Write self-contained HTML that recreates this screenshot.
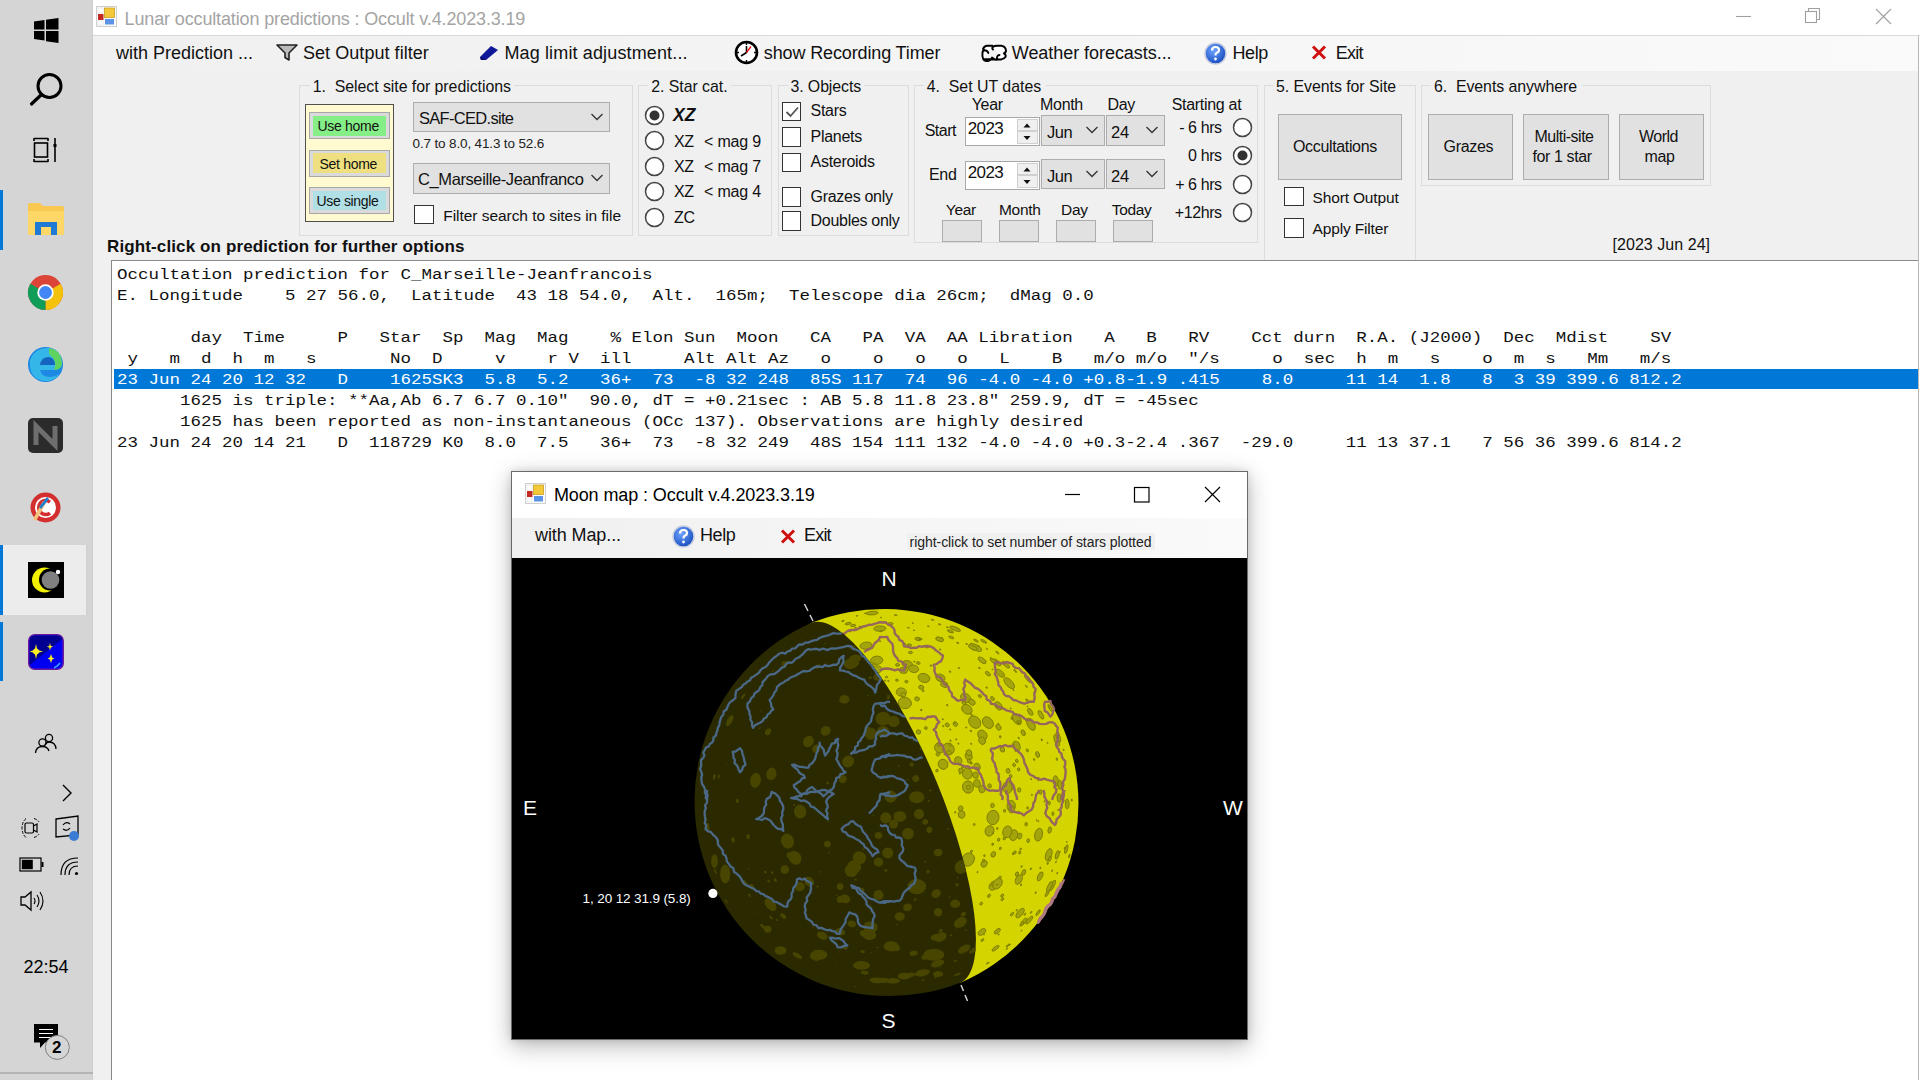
<!DOCTYPE html><html><head><meta charset="utf-8"><style>
html,body{margin:0;padding:0}
body{width:1920px;height:1080px;position:relative;overflow:hidden;background:#fff;font-family:"Liberation Sans",sans-serif}
.t{position:absolute;white-space:pre}
.b{position:absolute;box-sizing:border-box}
</style></head><body>
<div class="b" style="left:0.0px;top:0.0px;width:93.0px;height:1080.0px;background:#d5d5d5;"></div>
<div class="b" style="left:92.0px;top:0.0px;width:1.0px;height:1080.0px;background:#cdcdcd;"></div>
<svg class="b" style="left:34px;top:18px;" width="25" height="25" viewBox="0 0 25 25"><path d="M0 3.5 L10.5 2 V11.5 H0Z M12 1.8 L24.5 0 V11.5 H12Z M0 13 H10.5 V22.5 L0 21Z M12 13 H24.5 V25 L12 23.2Z" fill="#000"/></svg>
<svg class="b" style="left:28px;top:70px;" width="40" height="40" viewBox="0 0 40 40"><circle cx="21.5" cy="16" r="11.5" fill="none" stroke="#000" stroke-width="3"/><path d="M13.5 24.5 L3.5 34" stroke="#000" stroke-width="3.2" stroke-linecap="round"/></svg>
<svg class="b" style="left:32px;top:136px;" width="28" height="28" viewBox="0 0 28 28"><path d="M2 2.5 H16 M2 25.5 H16 M2 2 V5 M16 2 V5 M2 23 V26 M16 23 V26" stroke="#000" stroke-width="1.6" fill="none"/><rect x="2.5" y="7" width="13" height="14" fill="none" stroke="#000" stroke-width="1.6"/><path d="M23 2 V26" stroke="#000" stroke-width="1.6"/><rect x="21.5" y="8" width="3" height="3" fill="#000"/></svg>
<div class="b" style="left:0.0px;top:190.0px;width:3.0px;height:60.0px;background:#0078d7;"></div>
<svg class="b" style="left:27px;top:202px;" width="38" height="34" viewBox="0 0 38 34"><path d="M1 3 Q1 1 3 1 H13 L16 4 H35 Q37 4 37 6 V31 Q37 33 35 33 H3 Q1 33 1 31Z" fill="#f8c850"/><path d="M1 9 H37 V31 Q37 33 35 33 H3 Q1 33 1 31Z" fill="#ffd766"/><path d="M8 33 V20 H30 V33 H24 V25 H14 V33Z" fill="#1f7ad6"/></svg>
<svg class="b" style="left:27px;top:274px;" width="37" height="37" viewBox="0 0 37 37"><circle cx="18.5" cy="18.5" r="17.5" fill="#db4437"/><path d="M18.5 18.5 L33.66 9.75 A17.5 17.5 0 0 1 18.5 36Z" fill="#f4c20d"/><path d="M18.5 18.5 L18.5 36 A17.5 17.5 0 0 1 3.34 9.75Z" fill="#0f9d58"/><circle cx="18.5" cy="18.5" r="8.2" fill="#fff"/><circle cx="18.5" cy="18.5" r="6.4" fill="#4285f4"/></svg>
<svg class="b" style="left:27px;top:346px;" width="37" height="37" viewBox="0 0 37 37"><circle cx="18.5" cy="18.5" r="17.5" fill="#1e88e5"/><path d="M3 14 Q8 2 20 2 Q33 2 35 16 Q35 24 26 24 H13 Q14 30 22 31 Q28 31 32 28 Q27 36 17 35 Q4 33 3 20Z" fill="#35b6e8"/><path d="M13 19 Q14 11 22 11 Q28 12 28 19Z" fill="#1565c0"/><path d="M22 2 Q34 4 35 17 Q35 24 27 24 Q31 15 22 8Z" fill="#5fd35f"/></svg>
<svg class="b" style="left:27px;top:417px;" width="37" height="37" viewBox="0 0 37 37"><rect x="1" y="1" width="35" height="35" rx="5" fill="#2b2b2b"/><path d="M9 28 V9 L28 28 V9" fill="none" stroke="#6e6e6e" stroke-width="5"/></svg>
<svg class="b" style="left:27px;top:489px;" width="37" height="37" viewBox="0 0 37 37"><circle cx="18.5" cy="18.5" r="15" fill="#d32f2f"/><circle cx="18.5" cy="18.5" r="10.5" fill="#fff"/><path d="M23 13 A7 7 0 1 0 23 24" stroke="#d32f2f" stroke-width="3.5" fill="none"/><path d="M6 30 L16 12 L19 14 L9 32Z" fill="#f3c27a"/><path d="M12 18 L20 8 L22 10 L14 20Z" fill="#1e7fd0"/></svg>
<div class="b" style="left:0.0px;top:545.0px;width:88.0px;height:70.0px;background:#ececec;"></div>
<div class="b" style="left:0.0px;top:545.0px;width:3.0px;height:70.0px;background:#0078d7;"></div>
<div class="b" style="left:86.0px;top:545.0px;width:2.0px;height:70.0px;background:#d2d2d2;"></div>
<svg class="b" style="left:28px;top:562px;" width="36" height="36" viewBox="0 0 36 36"><rect width="36" height="36" fill="#000"/><circle cx="16.5" cy="18" r="12.5" fill="#f2f200"/><circle cx="22" cy="17.5" r="11" fill="#000"/><circle cx="22.5" cy="18" r="8.8" fill="#808080"/><circle cx="30" cy="10" r="2.2" fill="#fff"/></svg>
<div class="b" style="left:0.0px;top:622.0px;width:3.0px;height:59.0px;background:#0078d7;"></div>
<svg class="b" style="left:28px;top:634px;" width="36" height="36" viewBox="0 0 36 36"><rect x="0.8" y="0.8" width="34.4" height="34.4" rx="6" fill="#0000f0" stroke="#6a1aa0" stroke-width="1.6"/><path d="M1.6 31 L34.4 5 V7 Q34.4 1.6 29 1.6 H7 Q1.6 1.6 1.6 7Z" fill="#000090"/><path d="M8 10 L9.3 16 L15 17.5 L9.3 19 L8 25 L6.7 19 L1.5 17.5 L6.7 16Z" fill="#ffee20"/><circle cx="8" cy="17.5" r="3" fill="#ffee20"/><path d="M22 9 l0.8 3 2.5 0.8 -2.5 0.8 -0.8 3 -0.8 -3 -2.5 -0.8 2.5 -0.8z M23 20 l1.2 3.5 2.3 1 -2.3 1 -1.2 3.5 -1.2 -3.5 -2.3 -1 2.3 -1z" fill="#ffee20"/><path d="M26 34 Q30 32 32 29" stroke="#39a0ff" stroke-width="1.6" fill="none"/></svg>
<svg class="b" style="left:34px;top:733px;" width="24" height="24" viewBox="0 0 24 24"><circle cx="8.5" cy="9.5" r="3.6" fill="none" stroke="#000" stroke-width="1.3"/><circle cx="15" cy="5" r="3.6" fill="none" stroke="#000" stroke-width="1.3"/><path d="M1.5 20 Q2 13.5 8.5 13.5 Q13.5 13.5 15 18 M11 12 Q12 9 15 9 Q21.5 9 22 16" fill="none" stroke="#000" stroke-width="1.3"/></svg>
<svg class="b" style="left:60px;top:783px;" width="14" height="20" viewBox="0 0 14 20"><path d="M3 2 L11 10 L3 18" fill="none" stroke="#000" stroke-width="1.4"/></svg>
<svg class="b" style="left:20px;top:816px;" width="22" height="24" viewBox="0 0 22 24"><rect x="5" y="7" width="8.5" height="10" rx="1.5" fill="none" stroke="#000" stroke-width="1.2"/><path d="M13.5 10 L17 8 V16 L13.5 14" fill="none" stroke="#000" stroke-width="1.2"/><path d="M6 2.5 Q2 6 2 12 Q2 18 6 21.5 M14 2.5 Q18 4 19 6 M14 21.5 Q18 20 19 18" fill="none" stroke="#000" stroke-width="1" stroke-dasharray="3 1.5"/></svg>
<svg class="b" style="left:54px;top:815px;" width="27" height="27" viewBox="0 0 27 27"><path d="M2 4 L24 1 V20 L2 22Z" fill="none" stroke="#000" stroke-width="1.3"/><path d="M9 10 Q12 6 16 9 M16 13 Q13 17 9 14" fill="none" stroke="#000" stroke-width="1.2"/><circle cx="20" cy="21" r="5" fill="#3a7bd5"/></svg>
<svg class="b" style="left:19px;top:857px;" width="26" height="16" viewBox="0 0 26 16"><rect x="1" y="1" width="21" height="13" fill="none" stroke="#000" stroke-width="1.2"/><rect x="2.8" y="2.8" width="11" height="9.4" fill="#000"/><rect x="22.5" y="5" width="2" height="5" fill="#000"/></svg>
<svg class="b" style="left:57px;top:853px;" width="26" height="26" viewBox="0 0 26 26"><path d="M4 22 Q4 5 21 5 M8 22 Q8 9 21 9 M12 22 Q12 13 21 13" fill="none" stroke="#000" stroke-width="1.2"/><circle cx="19.5" cy="20.5" r="1.6" fill="#000"/></svg>
<svg class="b" style="left:19px;top:889px;" width="26" height="24" viewBox="0 0 26 24"><path d="M2 8 H6 L12 3 V21 L6 16 H2Z" fill="none" stroke="#000" stroke-width="1.3"/><path d="M15 9 Q17 12 15 15 M18 6 Q22 12 18 18 M21 3 Q27 12 21 21" fill="none" stroke="#000" stroke-width="1.1"/></svg>
<div class="t" style="left:23.5px;top:957.7px;font-size:18px;line-height:18px;color:#000;font-weight:400;letter-spacing:0px;font-family:'Liberation Sans', sans-serif;">22:54</div>
<svg class="b" style="left:30px;top:1020px;" width="44" height="44" viewBox="0 0 44 44"><path d="M4 4 H28 V22.5 H15 L10 28 V22.5 H4Z" fill="#000"/><path d="M9 9.5 H23 M9 13.5 H23 M9 17.5 H21" stroke="#fff" stroke-width="1.2"/><circle cx="27.3" cy="27.4" r="12" fill="#d5d5d5" stroke="#808080" stroke-width="1"/></svg>
<div class="t" style="left:52.0px;top:1039.0px;font-size:17px;line-height:17px;color:#000;font-weight:700;letter-spacing:0px;font-family:'Liberation Sans', sans-serif;">2</div>
<div class="b" style="left:0.0px;top:1072.0px;width:93.0px;height:2.0px;background:#b4b4b4;"></div>
<div class="b" style="left:93.0px;top:0.0px;width:1827.0px;height:36.0px;background:#fff;"></div>
<div class="b" style="left:93.0px;top:35.0px;width:1827.0px;height:1.0px;background:#d8d8d8;"></div>
<svg class="b" style="left:96px;top:6px;" width="21" height="21" viewBox="0 0 21 21"><rect x="0.5" y="0.5" width="20" height="20" fill="#fbfbfb" stroke="#cfcfcf"/><rect x="2" y="2" width="5" height="5" fill="#fff" stroke="#e0e0e0" stroke-width="0.6"/><rect x="2" y="8" width="5.5" height="6" fill="#c42a22"/><rect x="2" y="15" width="5" height="4" fill="#fff" stroke="#e0e0e0" stroke-width="0.6"/><rect x="8.5" y="2" width="10" height="9.5" fill="#f3c93a" stroke="#c8a020" stroke-width="0.8"/><rect x="9" y="13" width="9" height="5.5" fill="#5b93e6"/></svg>
<div class="t" style="left:124.6px;top:10.2px;font-size:18px;line-height:18px;color:#a4a4a4;font-weight:400;letter-spacing:-0.14px;font-family:'Liberation Sans', sans-serif;">Lunar occultation predictions : Occult v.4.2023.3.19</div>
<svg class="b" style="left:1730px;top:5px;" width="180" height="26" viewBox="0 0 180 26"><path d="M6 11.5 H21" stroke="#a0a0a0" stroke-width="1.1"/><rect x="75.5" y="6.5" width="11" height="11" fill="none" stroke="#a0a0a0" stroke-width="1.1"/><path d="M78.5 6.5 V3.5 H89.5 V14.5 H86.5" fill="none" stroke="#a0a0a0" stroke-width="1.1"/><path d="M146 4 L161 19 M161 4 L146 19" stroke="#a0a0a0" stroke-width="1.1"/></svg>
<div class="b" style="left:93.0px;top:36.0px;width:1827.0px;height:35.0px;background:linear-gradient(to right,#f0f0f0,#f3f3f3 30%,#fafafa);"></div>
<div class="t" style="left:116.0px;top:43.5px;font-size:18px;line-height:18px;color:#111;font-weight:400;letter-spacing:0px;font-family:'Liberation Sans', sans-serif;">with Prediction ...</div>
<svg class="b" style="left:276px;top:44px;" width="22" height="17" viewBox="0 0 22 17"><path d="M1 1 H21 L13 9 V16 L9 13.5 V9Z" fill="#bbb" stroke="#222" stroke-width="1.6" stroke-linejoin="round"/></svg>
<div class="t" style="left:303.0px;top:43.5px;font-size:18px;line-height:18px;color:#111;font-weight:400;letter-spacing:0.05px;font-family:'Liberation Sans', sans-serif;">Set Output filter</div>
<svg class="b" style="left:478px;top:44px;" width="22" height="17" viewBox="0 0 22 17"><path d="M2 13 L13 2 L20 6 L8 16 L3 16Z" fill="#10189a"/><path d="M2 13 L3 16 L8 16" fill="#050a60"/></svg>
<div class="t" style="left:504.4px;top:43.5px;font-size:18px;line-height:18px;color:#111;font-weight:400;letter-spacing:0.14px;font-family:'Liberation Sans', sans-serif;">Mag limit adjustment...</div>
<svg class="b" style="left:734px;top:40px;" width="25" height="25" viewBox="0 0 25 25"><circle cx="12.5" cy="12.5" r="10.5" fill="#fff" stroke="#000" stroke-width="2.6"/><path d="M12.5 12.5 L12.5 6 M12.5 12.5 L7 16" stroke="#000" stroke-width="1.6"/><path d="M12.5 12.5 L17 6.5" stroke="#e00" stroke-width="1.3"/><path d="M12.5 3 V5 M12.5 20 V22 M3 12.5 H5 M20 12.5 H22" stroke="#000" stroke-width="1.4"/></svg>
<div class="t" style="left:763.8px;top:43.5px;font-size:18px;line-height:18px;color:#111;font-weight:400;letter-spacing:-0.13px;font-family:'Liberation Sans', sans-serif;">show Recording Timer</div>
<svg class="b" style="left:981px;top:44px;" width="27" height="19" viewBox="0 0 27 19"><path d="M2.2 15 Q1 12 1.5 9 Q1.5 6.5 3.5 6.3 Q6.5 6.5 7.3 9 M3.5 6.3 Q2.5 5.5 2 5 Q3.5 1.8 6 1.8 H11.5 L11.8 3 Q10.5 4 12 5.5 M11.8 3 Q13.5 1.8 16 1.8 H20.5 Q24.5 2.5 25 6.5 Q25.2 8.5 22.8 9.3 Q25.2 10.5 24.6 12.8 Q23 15.3 20 15.5 H16.8 Q15.2 14 16.2 12.5 Q17 11.2 18.5 11 M16.8 15.5 Q15 15.8 14 15.6 L11 13.5 Q9.5 17 7 17 H5.2 Q3 16.8 2.2 15Z" fill="#fff" stroke="#000" stroke-width="1.9" stroke-linecap="round" stroke-linejoin="round"/></svg>
<div class="t" style="left:1011.8px;top:43.5px;font-size:18px;line-height:18px;color:#111;font-weight:400;letter-spacing:-0.05px;font-family:'Liberation Sans', sans-serif;">Weather forecasts...</div>
<svg class="b" style="left:1204px;top:41.5px;" width="23" height="23" viewBox="0 0 23 23"><defs><radialGradient id="hg" cx="40%" cy="35%" r="65%"><stop offset="0" stop-color="#6fa4ff"/><stop offset="1" stop-color="#1a4fc0"/></radialGradient></defs><circle cx="11.5" cy="11.5" r="10.5" fill="url(#hg)" stroke="#c8cde0" stroke-width="1.5"/><path d="M8 8.5 Q8 5 11.5 5 Q15 5 15 8 Q15 10 12.5 11 Q11.5 11.5 11.5 13.5" fill="none" stroke="#fff" stroke-width="2.2"/><circle cx="11.5" cy="17" r="1.4" fill="#fff"/></svg>
<div class="t" style="left:1232.5px;top:43.5px;font-size:18px;line-height:18px;color:#111;font-weight:400;letter-spacing:-0.4px;font-family:'Liberation Sans', sans-serif;">Help</div>
<svg class="b" style="left:1311px;top:45px;" width="16" height="15" viewBox="0 0 16 15"><path d="M2 1.5 L14 13.5 M14 1.5 L2 13.5" stroke="#d01010" stroke-width="3"/></svg>
<div class="t" style="left:1335.8px;top:43.5px;font-size:18px;line-height:18px;color:#111;font-weight:400;letter-spacing:-0.8px;font-family:'Liberation Sans', sans-serif;">Exit</div>
<div class="b" style="left:93.0px;top:71.0px;width:1827.0px;height:189.0px;background:#f0f0f0;"></div>
<div class="b" style="left:93.0px;top:260.0px;width:18.0px;height:820.0px;background:#f0f0f0;"></div>
<div class="b" style="left:299.0px;top:85.0px;width:334.0px;height:151.0px;border:1px solid #dcdcdc;"></div>
<div class="b" style="left:309.8px;top:83.0px;width:204.0px;height:5.0px;background:#f0f0f0;"></div>
<div class="t" style="left:312.8px;top:78.5px;font-size:15.9px;line-height:15.9px;color:#111;font-weight:400;letter-spacing:-0.05px;font-family:'Liberation Sans', sans-serif;">1.  Select site for predictions</div>
<div class="b" style="left:638.0px;top:85.0px;width:134.0px;height:151.0px;border:1px solid #dcdcdc;"></div>
<div class="b" style="left:648.3px;top:83.0px;width:82.3px;height:5.0px;background:#f0f0f0;"></div>
<div class="t" style="left:651.3px;top:78.5px;font-size:15.9px;line-height:15.9px;color:#111;font-weight:400;letter-spacing:-0.05px;font-family:'Liberation Sans', sans-serif;">2. Star cat.</div>
<div class="b" style="left:778.0px;top:85.0px;width:131.0px;height:151.0px;border:1px solid #dcdcdc;"></div>
<div class="b" style="left:787.5px;top:83.0px;width:76.8px;height:5.0px;background:#f0f0f0;"></div>
<div class="t" style="left:790.5px;top:78.5px;font-size:15.9px;line-height:15.9px;color:#111;font-weight:400;letter-spacing:-0.1px;font-family:'Liberation Sans', sans-serif;">3. Objects</div>
<div class="b" style="left:914.0px;top:85.0px;width:344.0px;height:158.0px;border:1px solid #dcdcdc;"></div>
<div class="b" style="left:923.7px;top:83.0px;width:122.3px;height:5.0px;background:#f0f0f0;"></div>
<div class="t" style="left:926.7px;top:78.5px;font-size:15.9px;line-height:15.9px;color:#111;font-weight:400;letter-spacing:0px;font-family:'Liberation Sans', sans-serif;">4.  Set UT dates</div>
<div class="b" style="left:1264.0px;top:85.0px;width:152.0px;height:190.0px;border:1px solid #dcdcdc;"></div>
<div class="b" style="left:1273.0px;top:83.0px;width:126.0px;height:5.0px;background:#f0f0f0;"></div>
<div class="t" style="left:1276.0px;top:78.5px;font-size:15.9px;line-height:15.9px;color:#111;font-weight:400;letter-spacing:-0.05px;font-family:'Liberation Sans', sans-serif;">5. Events for Site</div>
<div class="b" style="left:1421.0px;top:85.0px;width:290.0px;height:101.0px;border:1px solid #dcdcdc;"></div>
<div class="b" style="left:1431.0px;top:83.0px;width:151.0px;height:5.0px;background:#f0f0f0;"></div>
<div class="t" style="left:1434.0px;top:78.5px;font-size:15.9px;line-height:15.9px;color:#111;font-weight:400;letter-spacing:-0.05px;font-family:'Liberation Sans', sans-serif;">6.  Events anywhere</div>
<div class="b" style="left:305.0px;top:104.0px;width:89.0px;height:118.0px;background:#fffad0;border:1.5px solid #505050;"></div>
<div class="b" style="left:309.0px;top:111.7px;width:81.0px;height:27.3px;background:#dadada;border:1.5px solid #a8a8a8;"></div>
<div class="b" style="left:313.0px;top:115.5px;width:73.0px;height:20.0px;background:#86ee86;"></div>
<div class="t" style="left:317.5px;top:119.1px;font-size:14px;line-height:14px;color:#111;font-weight:400;letter-spacing:-0.3px;font-family:'Liberation Sans', sans-serif;">Use home</div>
<div class="b" style="left:309.0px;top:149.5px;width:81.0px;height:27.5px;background:#dadada;border:1.5px solid #a8a8a8;"></div>
<div class="b" style="left:313.0px;top:153.3px;width:73.0px;height:19.9px;background:#eedf80;"></div>
<div class="t" style="left:319.5px;top:156.6px;font-size:14px;line-height:14px;color:#111;font-weight:400;letter-spacing:-0.3px;font-family:'Liberation Sans', sans-serif;">Set home</div>
<div class="b" style="left:309.0px;top:187.0px;width:81.0px;height:27.0px;background:#dadada;border:1.5px solid #a8a8a8;"></div>
<div class="b" style="left:313.0px;top:190.8px;width:73.0px;height:19.4px;background:#b0dfe6;"></div>
<div class="t" style="left:316.5px;top:194.1px;font-size:14px;line-height:14px;color:#111;font-weight:400;letter-spacing:-0.35px;font-family:'Liberation Sans', sans-serif;">Use single</div>
<div class="b" style="left:413.0px;top:101.5px;width:197.0px;height:30.5px;background:#e1e1e1;border:1.5px solid #adadad;"></div>
<div class="b" style="left:415px;top:101.5px;width:169px;height:30.5px;overflow:hidden">
<div class="t" style="left:4.0px;top:8.0px;font-size:16.5px;line-height:16.5px;letter-spacing:-0.7px;color:#111">SAF-CED.site</div></div>
<svg class="b" style="left:590px;top:112px;" width="14" height="10" viewBox="0 0 14 10"><path d="M1.5 2 L7 7.5 L12.5 2" fill="none" stroke="#333" stroke-width="1.3"/></svg>
<div class="t" style="left:412.6px;top:137.2px;font-size:13.5px;line-height:13.5px;color:#222;font-weight:400;letter-spacing:-0.15px;font-family:'Liberation Sans', sans-serif;">0.7 to 8.0, 41.3 to 52.6</div>
<div class="b" style="left:413.0px;top:163.0px;width:197.0px;height:30.5px;background:#e1e1e1;border:1.5px solid #adadad;"></div>
<div class="b" style="left:415px;top:163px;width:169px;height:30.5px;overflow:hidden">
<div class="t" style="left:3.0px;top:8.0px;font-size:16.5px;line-height:16.5px;letter-spacing:-0.4px;color:#111">C_Marseille-Jeanfrancois</div></div>
<svg class="b" style="left:590px;top:173px;" width="14" height="10" viewBox="0 0 14 10"><path d="M1.5 2 L7 7.5 L12.5 2" fill="none" stroke="#333" stroke-width="1.3"/></svg>
<div class="b" style="left:414.0px;top:204.5px;width:19.5px;height:19.5px;background:#fff;border:1.6px solid #333;"></div>
<div class="t" style="left:443.3px;top:207.8px;font-size:15.5px;line-height:15.5px;color:#111;font-weight:400;letter-spacing:-0.05px;font-family:'Liberation Sans', sans-serif;">Filter search to sites in file</div>
<svg class="b" style="left:644px;top:105px;" width="21" height="21" viewBox="0 0 21 21"><circle cx="10.5" cy="10.5" r="9" fill="#fff" stroke="#444" stroke-width="1.5"/><circle cx="10.5" cy="10.5" r="5" fill="#333"/></svg>
<svg class="b" style="left:644px;top:130px;" width="21" height="21" viewBox="0 0 21 21"><circle cx="10.5" cy="10.5" r="9" fill="#fff" stroke="#444" stroke-width="1.5"/></svg>
<svg class="b" style="left:644px;top:156px;" width="21" height="21" viewBox="0 0 21 21"><circle cx="10.5" cy="10.5" r="9" fill="#fff" stroke="#444" stroke-width="1.5"/></svg>
<svg class="b" style="left:644px;top:181px;" width="21" height="21" viewBox="0 0 21 21"><circle cx="10.5" cy="10.5" r="9" fill="#fff" stroke="#444" stroke-width="1.5"/></svg>
<svg class="b" style="left:644px;top:207px;" width="21" height="21" viewBox="0 0 21 21"><circle cx="10.5" cy="10.5" r="9" fill="#fff" stroke="#444" stroke-width="1.5"/></svg>
<div class="t" style="left:673.0px;top:106.8px;font-size:17.5px;line-height:17.5px;color:#111;font-weight:700;letter-spacing:0px;font-family:'Liberation Sans', sans-serif;font-style:italic;">XZ</div>
<div class="t" style="left:674.0px;top:133.5px;font-size:16px;line-height:16px;color:#111;font-weight:400;letter-spacing:-0.3px;font-family:'Liberation Sans', sans-serif;">XZ</div>
<div class="t" style="left:704.0px;top:133.5px;font-size:16px;line-height:16px;color:#111;font-weight:400;letter-spacing:-0.2px;font-family:'Liberation Sans', sans-serif;">&lt; mag 9</div>
<div class="t" style="left:674.0px;top:159.0px;font-size:16px;line-height:16px;color:#111;font-weight:400;letter-spacing:-0.3px;font-family:'Liberation Sans', sans-serif;">XZ</div>
<div class="t" style="left:704.0px;top:159.0px;font-size:16px;line-height:16px;color:#111;font-weight:400;letter-spacing:-0.2px;font-family:'Liberation Sans', sans-serif;">&lt; mag 7</div>
<div class="t" style="left:674.0px;top:184.2px;font-size:16px;line-height:16px;color:#111;font-weight:400;letter-spacing:-0.3px;font-family:'Liberation Sans', sans-serif;">XZ</div>
<div class="t" style="left:704.0px;top:184.2px;font-size:16px;line-height:16px;color:#111;font-weight:400;letter-spacing:-0.2px;font-family:'Liberation Sans', sans-serif;">&lt; mag 4</div>
<div class="t" style="left:674.0px;top:209.8px;font-size:16px;line-height:16px;color:#111;font-weight:400;letter-spacing:-0.3px;font-family:'Liberation Sans', sans-serif;">ZC</div>
<div class="b" style="left:781.8px;top:101.5px;width:19.5px;height:19.5px;background:#fff;border:1.6px solid #333;"></div>
<svg class="b" style="left:784px;top:104px;" width="16" height="16" viewBox="0 0 16 16"><path d="M2.5 8 L6.5 12 L14 3.5" fill="none" stroke="#555" stroke-width="1.8"/></svg>
<div class="t" style="left:810.6px;top:102.9px;font-size:16px;line-height:16px;color:#111;font-weight:400;letter-spacing:-0.3px;font-family:'Liberation Sans', sans-serif;">Stars</div>
<div class="b" style="left:781.8px;top:127.0px;width:19.5px;height:19.5px;background:#fff;border:1.6px solid #333;"></div>
<div class="t" style="left:810.6px;top:128.8px;font-size:16px;line-height:16px;color:#111;font-weight:400;letter-spacing:-0.3px;font-family:'Liberation Sans', sans-serif;">Planets</div>
<div class="b" style="left:781.8px;top:152.7px;width:19.5px;height:19.5px;background:#fff;border:1.6px solid #333;"></div>
<div class="t" style="left:810.6px;top:154.0px;font-size:16px;line-height:16px;color:#111;font-weight:400;letter-spacing:-0.3px;font-family:'Liberation Sans', sans-serif;">Asteroids</div>
<div class="b" style="left:781.8px;top:187.3px;width:19.5px;height:19.5px;background:#fff;border:1.6px solid #333;"></div>
<div class="t" style="left:810.6px;top:188.7px;font-size:16px;line-height:16px;color:#111;font-weight:400;letter-spacing:-0.3px;font-family:'Liberation Sans', sans-serif;">Grazes only</div>
<div class="b" style="left:781.8px;top:211.4px;width:19.5px;height:19.5px;background:#fff;border:1.6px solid #333;"></div>
<div class="t" style="left:810.6px;top:213.1px;font-size:16px;line-height:16px;color:#111;font-weight:400;letter-spacing:-0.3px;font-family:'Liberation Sans', sans-serif;">Doubles only</div>
<div class="t" style="left:971.7px;top:97.2px;font-size:16px;line-height:16px;color:#111;font-weight:400;letter-spacing:-0.3px;font-family:'Liberation Sans', sans-serif;">Year</div>
<div class="t" style="left:1040.0px;top:97.2px;font-size:16px;line-height:16px;color:#111;font-weight:400;letter-spacing:-0.3px;font-family:'Liberation Sans', sans-serif;">Month</div>
<div class="t" style="left:1107.5px;top:97.2px;font-size:16px;line-height:16px;color:#111;font-weight:400;letter-spacing:-0.3px;font-family:'Liberation Sans', sans-serif;">Day</div>
<div class="t" style="left:1171.7px;top:97.2px;font-size:16px;line-height:16px;color:#111;font-weight:400;letter-spacing:-0.3px;font-family:'Liberation Sans', sans-serif;">Starting at</div>
<div class="t" style="left:924.7px;top:123.1px;font-size:16px;line-height:16px;color:#111;font-weight:400;letter-spacing:-0.5px;font-family:'Liberation Sans', sans-serif;">Start</div>
<div class="t" style="left:929.0px;top:166.9px;font-size:16px;line-height:16px;color:#111;font-weight:400;letter-spacing:-0.3px;font-family:'Liberation Sans', sans-serif;">End</div>
<div class="b" style="left:964.7px;top:116.7px;width:75.3px;height:29.3px;background:#fff;border:1.5px solid #a8a8a8;"></div>
<div class="t" style="left:967.7px;top:119.7px;font-size:17px;line-height:17px;color:#111;font-weight:400;letter-spacing:-0.6px;font-family:'Liberation Sans', sans-serif;">2023</div>
<div class="b" style="left:1017.0px;top:118.7px;width:21.0px;height:12.6px;background:#f0f0f0;border:1px solid #d0d0d0;"></div>
<div class="b" style="left:1017.0px;top:131.3px;width:21.0px;height:12.7px;background:#f0f0f0;border:1px solid #d0d0d0;"></div>
<svg class="b" style="left:1022px;top:122px;" width="10" height="20" viewBox="0 0 10 20"><path d="M1.5 5.5 L5 1.5 L8.5 5.5Z M1.5 14 L5 18 L8.5 14Z" fill="#111"/></svg>
<div class="b" style="left:964.7px;top:160.5px;width:75.3px;height:29.0px;background:#fff;border:1.5px solid #a8a8a8;"></div>
<div class="t" style="left:967.7px;top:163.6px;font-size:17px;line-height:17px;color:#111;font-weight:400;letter-spacing:-0.6px;font-family:'Liberation Sans', sans-serif;">2023</div>
<div class="b" style="left:1017.0px;top:162.5px;width:21.0px;height:12.5px;background:#f0f0f0;border:1px solid #d0d0d0;"></div>
<div class="b" style="left:1017.0px;top:175.0px;width:21.0px;height:12.5px;background:#f0f0f0;border:1px solid #d0d0d0;"></div>
<svg class="b" style="left:1022px;top:166px;" width="10" height="20" viewBox="0 0 10 20"><path d="M1.5 5.5 L5 1.5 L8.5 5.5Z M1.5 14 L5 18 L8.5 14Z" fill="#111"/></svg>
<div class="b" style="left:1040.8px;top:115.0px;width:64.2px;height:30.5px;background:#e1e1e1;border:1.5px solid #adadad;"></div>
<div class="b" style="left:1042.8px;top:115px;width:36.200000000000045px;height:30.5px;overflow:hidden">
<div class="t" style="left:4.2px;top:8.5px;font-size:16.5px;line-height:16.5px;letter-spacing:-0.5px;color:#111">Jun</div></div>
<svg class="b" style="left:1085px;top:125px;" width="14" height="10" viewBox="0 0 14 10"><path d="M1.5 2 L7 7.5 L12.5 2" fill="none" stroke="#333" stroke-width="1.3"/></svg>
<div class="b" style="left:1106.0px;top:115.0px;width:59.0px;height:30.5px;background:#e1e1e1;border:1.5px solid #adadad;"></div>
<div class="b" style="left:1108px;top:115px;width:31px;height:30.5px;overflow:hidden">
<div class="t" style="left:3.0px;top:8.5px;font-size:16.5px;line-height:16.5px;letter-spacing:-0.3px;color:#111">24</div></div>
<svg class="b" style="left:1145px;top:125px;" width="14" height="10" viewBox="0 0 14 10"><path d="M1.5 2 L7 7.5 L12.5 2" fill="none" stroke="#333" stroke-width="1.3"/></svg>
<div class="b" style="left:1040.8px;top:159.0px;width:64.2px;height:30.0px;background:#e1e1e1;border:1.5px solid #adadad;"></div>
<div class="b" style="left:1042.8px;top:159px;width:36.200000000000045px;height:30px;overflow:hidden">
<div class="t" style="left:4.2px;top:8.5px;font-size:16.5px;line-height:16.5px;letter-spacing:-0.5px;color:#111">Jun</div></div>
<svg class="b" style="left:1085px;top:169px;" width="14" height="10" viewBox="0 0 14 10"><path d="M1.5 2 L7 7.5 L12.5 2" fill="none" stroke="#333" stroke-width="1.3"/></svg>
<div class="b" style="left:1106.0px;top:159.0px;width:59.0px;height:30.0px;background:#e1e1e1;border:1.5px solid #adadad;"></div>
<div class="b" style="left:1108px;top:159px;width:31px;height:30px;overflow:hidden">
<div class="t" style="left:3.0px;top:8.5px;font-size:16.5px;line-height:16.5px;letter-spacing:-0.3px;color:#111">24</div></div>
<svg class="b" style="left:1145px;top:169px;" width="14" height="10" viewBox="0 0 14 10"><path d="M1.5 2 L7 7.5 L12.5 2" fill="none" stroke="#333" stroke-width="1.3"/></svg>
<svg class="b" style="left:1232px;top:117px;" width="21" height="21" viewBox="0 0 21 21"><circle cx="10.5" cy="10.5" r="9" fill="#fff" stroke="#444" stroke-width="1.5"/></svg>
<div class="t" style="left:1100px;width:121.7px;text-align:right;top:119.9px;font-size:16px;line-height:16px;color:#111;letter-spacing:-0.4px">- 6 hrs</div>
<svg class="b" style="left:1232px;top:145px;" width="21" height="21" viewBox="0 0 21 21"><circle cx="10.5" cy="10.5" r="9" fill="#fff" stroke="#444" stroke-width="1.5"/><circle cx="10.5" cy="10.5" r="5" fill="#333"/></svg>
<div class="t" style="left:1100px;width:121.7px;text-align:right;top:148.2px;font-size:16px;line-height:16px;color:#111;letter-spacing:-0.4px">0 hrs</div>
<svg class="b" style="left:1232px;top:174px;" width="21" height="21" viewBox="0 0 21 21"><circle cx="10.5" cy="10.5" r="9" fill="#fff" stroke="#444" stroke-width="1.5"/></svg>
<div class="t" style="left:1100px;width:121.7px;text-align:right;top:176.6px;font-size:16px;line-height:16px;color:#111;letter-spacing:-0.4px">+ 6 hrs</div>
<svg class="b" style="left:1232px;top:202px;" width="21" height="21" viewBox="0 0 21 21"><circle cx="10.5" cy="10.5" r="9" fill="#fff" stroke="#444" stroke-width="1.5"/></svg>
<div class="t" style="left:1100px;width:121.7px;text-align:right;top:204.9px;font-size:16px;line-height:16px;color:#111;letter-spacing:-0.4px">+12hrs</div>
<div class="t" style="left:945.8px;top:201.8px;font-size:15.5px;line-height:15.5px;color:#111;font-weight:400;letter-spacing:-0.3px;font-family:'Liberation Sans', sans-serif;">Year</div>
<div class="b" style="left:942.0px;top:220.0px;width:40.0px;height:22.0px;background:#e1e1e1;border:1.5px solid #adadad;"></div>
<div class="t" style="left:999.0px;top:201.8px;font-size:15.5px;line-height:15.5px;color:#111;font-weight:400;letter-spacing:-0.3px;font-family:'Liberation Sans', sans-serif;">Month</div>
<div class="b" style="left:999.0px;top:220.0px;width:40.0px;height:22.0px;background:#e1e1e1;border:1.5px solid #adadad;"></div>
<div class="t" style="left:1061.0px;top:201.8px;font-size:15.5px;line-height:15.5px;color:#111;font-weight:400;letter-spacing:-0.3px;font-family:'Liberation Sans', sans-serif;">Day</div>
<div class="b" style="left:1056.0px;top:220.0px;width:40.0px;height:22.0px;background:#e1e1e1;border:1.5px solid #adadad;"></div>
<div class="t" style="left:1111.7px;top:201.8px;font-size:15.5px;line-height:15.5px;color:#111;font-weight:400;letter-spacing:-0.3px;font-family:'Liberation Sans', sans-serif;">Today</div>
<div class="b" style="left:1113.0px;top:220.0px;width:40.0px;height:22.0px;background:#e1e1e1;border:1.5px solid #adadad;"></div>
<div class="b" style="left:1278.0px;top:113.5px;width:124.0px;height:66.7px;background:#e1e1e1;border:1.5px solid #adadad;"></div>
<div class="t" style="left:1293.0px;top:139.4px;font-size:16px;line-height:16px;color:#111;font-weight:400;letter-spacing:-0.35px;font-family:'Liberation Sans', sans-serif;">Occultations</div>
<div class="b" style="left:1284.0px;top:186.7px;width:19.5px;height:19.5px;background:#fff;border:1.6px solid #333;"></div>
<div class="b" style="left:1284.0px;top:218.0px;width:19.5px;height:19.5px;background:#fff;border:1.6px solid #333;"></div>
<div class="t" style="left:1312.5px;top:189.8px;font-size:15.5px;line-height:15.5px;color:#111;font-weight:400;letter-spacing:-0.15px;font-family:'Liberation Sans', sans-serif;">Short Output</div>
<div class="t" style="left:1312.5px;top:220.8px;font-size:15.5px;line-height:15.5px;color:#111;font-weight:400;letter-spacing:-0.15px;font-family:'Liberation Sans', sans-serif;">Apply Filter</div>
<div class="b" style="left:1428.0px;top:113.5px;width:85.0px;height:66.7px;background:#e1e1e1;border:1.5px solid #adadad;"></div>
<div class="t" style="left:1443.5px;top:139.4px;font-size:16px;line-height:16px;color:#111;font-weight:400;letter-spacing:-0.3px;font-family:'Liberation Sans', sans-serif;">Grazes</div>
<div class="b" style="left:1523.0px;top:113.5px;width:86.0px;height:66.7px;background:#e1e1e1;border:1.5px solid #adadad;"></div>
<div class="t" style="left:1534.5px;top:128.9px;font-size:16px;line-height:16px;color:#111;font-weight:400;letter-spacing:-0.5px;font-family:'Liberation Sans', sans-serif;">Multi-site</div>
<div class="t" style="left:1532.5px;top:148.9px;font-size:16px;line-height:16px;color:#111;font-weight:400;letter-spacing:-0.4px;font-family:'Liberation Sans', sans-serif;">for 1 star</div>
<div class="b" style="left:1619.0px;top:113.5px;width:85.0px;height:66.7px;background:#e1e1e1;border:1.5px solid #adadad;"></div>
<div class="t" style="left:1639.0px;top:128.9px;font-size:16px;line-height:16px;color:#111;font-weight:400;letter-spacing:-0.5px;font-family:'Liberation Sans', sans-serif;">World</div>
<div class="t" style="left:1644.5px;top:148.9px;font-size:16px;line-height:16px;color:#111;font-weight:400;letter-spacing:-0.4px;font-family:'Liberation Sans', sans-serif;">map</div>
<div class="t" style="left:1612.5px;top:237.4px;font-size:16px;line-height:16px;color:#111;font-weight:400;letter-spacing:0.05px;font-family:'Liberation Sans', sans-serif;">[2023 Jun 24]</div>
<div class="t" style="left:107.0px;top:238.1px;font-size:17px;line-height:17px;color:#111;font-weight:700;letter-spacing:0.12px;font-family:'Liberation Sans', sans-serif;">Right-click on prediction for further options</div>
<div class="b" style="left:111.0px;top:260.0px;width:1809.0px;height:820.0px;background:#fff;border:1px solid #8a8a8a;border-bottom:none;border-right:none;"></div>
<div class="b" style="left:1918.0px;top:36.0px;width:1.0px;height:1044.0px;background:#b8b8b8;"></div>
<div class="b" style="left:1919.0px;top:36.0px;width:1.0px;height:1044.0px;background:#fff;"></div>
<div class="b" style="left:114.0px;top:368.5px;width:1804.0px;height:20.5px;background:#0078d7;"></div>
<div class="t" style="left:117.0px;top:266.3px;font-size:17.5px;line-height:17.5px;color:#111;font-weight:400;letter-spacing:0px;font-family:'Liberation Mono', monospace;transform:scaleY(0.84);transform-origin:0 13.3px;">Occultation prediction for C_Marseille-Jeanfrancois</div>
<div class="t" style="left:117.0px;top:287.3px;font-size:17.5px;line-height:17.5px;color:#111;font-weight:400;letter-spacing:0px;font-family:'Liberation Mono', monospace;transform:scaleY(0.84);transform-origin:0 13.3px;">E. Longitude    5 27 56.0,  Latitude  43 18 54.0,  Alt.  165m;  Telescope dia 26cm;  dMag 0.0</div>
<div class="t" style="left:117.0px;top:308.3px;font-size:17.5px;line-height:17.5px;color:#111;font-weight:400;letter-spacing:0px;font-family:'Liberation Mono', monospace;transform:scaleY(0.84);transform-origin:0 13.3px;"></div>
<div class="t" style="left:117.0px;top:329.3px;font-size:17.5px;line-height:17.5px;color:#111;font-weight:400;letter-spacing:0px;font-family:'Liberation Mono', monospace;transform:scaleY(0.84);transform-origin:0 13.3px;">       day  Time     P   Star  Sp  Mag  Mag    % Elon Sun  Moon   CA   PA  VA  AA Libration   A   B   RV    Cct durn  R.A. (J2000)  Dec  Mdist    SV</div>
<div class="t" style="left:117.0px;top:350.3px;font-size:17.5px;line-height:17.5px;color:#111;font-weight:400;letter-spacing:0px;font-family:'Liberation Mono', monospace;transform:scaleY(0.84);transform-origin:0 13.3px;"> y   m  d  h  m   s       No  D     v    r V  ill     Alt Alt Az   o    o   o   o   L    B   m/o m/o  &quot;/s     o  sec  h  m   s    o  m  s   Mm   m/s</div>
<div class="t" style="left:117.0px;top:371.3px;font-size:17.5px;line-height:17.5px;color:#fff;font-weight:400;letter-spacing:0px;font-family:'Liberation Mono', monospace;transform:scaleY(0.84);transform-origin:0 13.3px;">23 Jun 24 20 12 32   D    1625SK3  5.8  5.2   36+  73  -8 32 248  85S 117  74  96 -4.0 -4.0 +0.8-1.9 .415    8.0     11 14  1.8   8  3 39 399.6 812.2</div>
<div class="t" style="left:117.0px;top:392.3px;font-size:17.5px;line-height:17.5px;color:#111;font-weight:400;letter-spacing:0px;font-family:'Liberation Mono', monospace;transform:scaleY(0.84);transform-origin:0 13.3px;">      1625 is triple: **Aa,Ab 6.7 6.7 0.10&quot;  90.0, dT = +0.21sec : AB 5.8 11.8 23.8&quot; 259.9, dT = -45sec</div>
<div class="t" style="left:117.0px;top:413.3px;font-size:17.5px;line-height:17.5px;color:#111;font-weight:400;letter-spacing:0px;font-family:'Liberation Mono', monospace;transform:scaleY(0.84);transform-origin:0 13.3px;">      1625 has been reported as non-instantaneous (OCc 137). Observations are highly desired</div>
<div class="t" style="left:117.0px;top:434.3px;font-size:17.5px;line-height:17.5px;color:#111;font-weight:400;letter-spacing:0px;font-family:'Liberation Mono', monospace;transform:scaleY(0.84);transform-origin:0 13.3px;">23 Jun 24 20 14 21   D  118729 K0  8.0  7.5   36+  73  -8 32 249  48S 154 111 132 -4.0 -4.0 +0.3-2.4 .367  -29.0     11 13 37.1   7 56 36 399.6 814.2</div>
<div class="b" style="left:511px;top:471px;width:737px;height:569px;box-shadow:0 6px 22px rgba(0,0,0,0.28),0 0 8px rgba(0,0,0,0.12);background:#fff;border:1px solid #6a6a6a;"></div>
<div class="b" style="left:512.0px;top:472.0px;width:735.0px;height:46.0px;background:#fff;"></div>
<svg class="b" style="left:525px;top:483px;" width="21" height="21" viewBox="0 0 21 21"><rect x="0.5" y="0.5" width="20" height="20" fill="#fbfbfb" stroke="#cfcfcf"/><rect x="2" y="2" width="5" height="5" fill="#fff" stroke="#e0e0e0" stroke-width="0.6"/><rect x="2" y="8" width="5.5" height="6" fill="#c42a22"/><rect x="2" y="15" width="5" height="4" fill="#fff" stroke="#e0e0e0" stroke-width="0.6"/><rect x="8.5" y="2" width="10" height="9.5" fill="#f3c93a" stroke="#c8a020" stroke-width="0.8"/><rect x="9" y="13" width="9" height="5.5" fill="#5b93e6"/></svg>
<div class="t" style="left:553.9px;top:486.4px;font-size:18px;line-height:18px;color:#000;font-weight:400;letter-spacing:-0.1px;font-family:'Liberation Sans', sans-serif;">Moon map : Occult v.4.2023.3.19</div>
<svg class="b" style="left:1060px;top:482px;" width="170" height="24" viewBox="0 0 170 24"><path d="M5 12.5 H20" stroke="#000" stroke-width="1.2"/><rect x="74.5" y="5.5" width="14.5" height="14.5" fill="none" stroke="#000" stroke-width="1.2"/><path d="M145 5 L160 20 M160 5 L145 20" stroke="#000" stroke-width="1.2"/></svg>
<div class="b" style="left:512.0px;top:518.0px;width:735.0px;height:40.0px;background:linear-gradient(to right,#f0f0f0,#f5f5f5 50%,#fafafa);"></div>
<div class="t" style="left:535.0px;top:526.2px;font-size:18px;line-height:18px;color:#111;font-weight:400;letter-spacing:-0.1px;font-family:'Liberation Sans', sans-serif;">with Map...</div>
<svg class="b" style="left:672px;top:524.5px;" width="23" height="23" viewBox="0 0 23 23"><defs><radialGradient id="hg" cx="40%" cy="35%" r="65%"><stop offset="0" stop-color="#6fa4ff"/><stop offset="1" stop-color="#1a4fc0"/></radialGradient></defs><circle cx="11.5" cy="11.5" r="10.5" fill="url(#hg)" stroke="#c8cde0" stroke-width="1.5"/><path d="M8 8.5 Q8 5 11.5 5 Q15 5 15 8 Q15 10 12.5 11 Q11.5 11.5 11.5 13.5" fill="none" stroke="#fff" stroke-width="2.2"/><circle cx="11.5" cy="17" r="1.4" fill="#fff"/></svg>
<div class="t" style="left:700.0px;top:526.2px;font-size:18px;line-height:18px;color:#111;font-weight:400;letter-spacing:-0.4px;font-family:'Liberation Sans', sans-serif;">Help</div>
<svg class="b" style="left:780px;top:529px;" width="16" height="15" viewBox="0 0 16 15"><path d="M2 1.5 L14 13.5 M14 1.5 L2 13.5" stroke="#d01010" stroke-width="3"/></svg>
<div class="t" style="left:804.0px;top:526.2px;font-size:18px;line-height:18px;color:#111;font-weight:400;letter-spacing:-0.8px;font-family:'Liberation Sans', sans-serif;">Exit</div>
<div class="b" style="left:907.0px;top:533.4px;width:247.6px;height:16.3px;background:#f0f0f0;"></div>
<div class="t" style="left:909.6px;top:534.6px;font-size:14px;line-height:14px;color:#222;font-weight:400;letter-spacing:-0.06px;font-family:'Liberation Sans', sans-serif;">right-click to set number of stars plotted</div>
<div class="b" style="left:512.0px;top:558.0px;width:735.0px;height:481.0px;background:#000;"></div>
<svg class="b" style="left:512px;top:558px" width="735" height="481" viewBox="512 558 735 481">
<defs><clipPath id="mc"><circle cx="886.5" cy="802.5" r="194.7"/></clipPath><clipPath id="lc"><path d="M812.1 622.6 A194.7 194.7 0 0 1 960.9 982.4 A194.7 40 67.5 0 1 812.1 622.6Z"/></clipPath><clipPath id="dc"><path d="M812.1 622.6 A194.7 194.7 0 0 0 960.9 982.4 A194.7 55 67.5 0 0 812.1 622.6Z"/></clipPath></defs>
<path d="M804.5 604 L808 611 M810 615 L813 621 M961 985 L963.5 991 M965 995 L967.5 1001" stroke="#d0d0d0" stroke-width="1.5"/>
<path d="M812.1 622.6 A194.7 194.7 0 0 1 960.9 982.4 A194.7 40 67.5 0 1 812.1 622.6Z" fill="#d4d400"/>
<g clip-path="url(#mc)">
<g fill="#a3a30c" stroke="#7d7d00" stroke-width="0.9"><ellipse cx="1026.1" cy="720.6" rx="0.4" ry="0.7" transform="rotate(-30 1026.1 720.6)"/><ellipse cx="964.0" cy="702.9" rx="1.7" ry="2.2" transform="rotate(-52 964.0 702.9)"/><ellipse cx="989.5" cy="830.9" rx="4.4" ry="5.3" transform="rotate(15 989.5 830.9)"/><ellipse cx="950.4" cy="631.4" rx="1.1" ry="3.3" transform="rotate(-70 950.4 631.4)"/><ellipse cx="1011.9" cy="718.6" rx="0.8" ry="1.2" transform="rotate(-34 1011.9 718.6)"/><ellipse cx="990.9" cy="658.2" rx="0.4" ry="0.9" transform="rotate(-54 990.9 658.2)"/><ellipse cx="921.2" cy="710.1" rx="0.6" ry="0.7" transform="rotate(-69 921.2 710.1)"/><ellipse cx="960.7" cy="808.5" rx="2.4" ry="2.6" transform="rotate(5 960.7 808.5)"/><ellipse cx="955.1" cy="628.8" rx="1.7" ry="5.6" transform="rotate(-68 955.1 628.8)"/><ellipse cx="995.5" cy="948.3" rx="1.5" ry="4.3" transform="rotate(53 995.5 948.3)"/><ellipse cx="930.9" cy="665.6" rx="0.6" ry="0.9" transform="rotate(-72 930.9 665.6)"/><ellipse cx="880.2" cy="641.2" rx="0.4" ry="0.7" transform="rotate(-92 880.2 641.2)"/><ellipse cx="897.5" cy="664.9" rx="1.4" ry="2.0" transform="rotate(-85 897.5 664.9)"/><ellipse cx="962.9" cy="709.5" rx="0.9" ry="1.2" transform="rotate(-51 962.9 709.5)"/><ellipse cx="1023.8" cy="921.7" rx="1.6" ry="4.6" transform="rotate(41 1023.8 921.7)"/><ellipse cx="979.9" cy="696.1" rx="1.3" ry="1.9" transform="rotate(-49 979.9 696.1)"/><ellipse cx="1063.7" cy="749.8" rx="0.3" ry="0.8" transform="rotate(-17 1063.7 749.8)"/><ellipse cx="1005.9" cy="664.7" rx="1.6" ry="4.7" transform="rotate(-49 1005.9 664.7)"/><ellipse cx="1013.5" cy="690.0" rx="0.4" ry="0.9" transform="rotate(-42 1013.5 690.0)"/><ellipse cx="1049.2" cy="803.1" rx="1.1" ry="2.0" transform="rotate(0 1049.2 803.1)"/><ellipse cx="895.7" cy="615.1" rx="0.4" ry="1.5" transform="rotate(-87 895.7 615.1)"/><ellipse cx="1003.0" cy="674.9" rx="0.8" ry="1.6" transform="rotate(-48 1003.0 674.9)"/><ellipse cx="974.2" cy="824.5" rx="0.9" ry="1.1" transform="rotate(14 974.2 824.5)"/><ellipse cx="910.0" cy="704.6" rx="0.8" ry="0.9" transform="rotate(-77 910.0 704.6)"/><ellipse cx="992.5" cy="805.5" rx="1.8" ry="2.2" transform="rotate(2 992.5 805.5)"/><ellipse cx="987.7" cy="963.1" rx="0.4" ry="1.5" transform="rotate(58 987.7 963.1)"/><ellipse cx="1010.7" cy="708.5" rx="0.4" ry="0.7" transform="rotate(-37 1010.7 708.5)"/><ellipse cx="1049.7" cy="830.0" rx="1.7" ry="3.3" transform="rotate(10 1049.7 830.0)"/><ellipse cx="959.8" cy="773.4" rx="0.6" ry="0.7" transform="rotate(-22 959.8 773.4)"/><ellipse cx="1057.2" cy="854.9" rx="1.7" ry="4.4" transform="rotate(17 1057.2 854.9)"/><ellipse cx="886.5" cy="677.1" rx="0.9" ry="1.1" transform="rotate(-90 886.5 677.1)"/><ellipse cx="906.4" cy="681.6" rx="1.3" ry="1.6" transform="rotate(-81 906.4 681.6)"/><ellipse cx="1010.7" cy="776.1" rx="1.3" ry="1.7" transform="rotate(-12 1010.7 776.1)"/><ellipse cx="1016.8" cy="760.9" rx="1.3" ry="1.8" transform="rotate(-18 1016.8 760.9)"/><ellipse cx="1030.8" cy="868.9" rx="0.5" ry="0.9" transform="rotate(25 1030.8 868.9)"/><ellipse cx="904.8" cy="703.0" rx="5.7" ry="6.6" transform="rotate(-80 904.8 703.0)"/><ellipse cx="984.1" cy="863.8" rx="2.8" ry="3.4" transform="rotate(32 984.1 863.8)"/><ellipse cx="1034.1" cy="759.5" rx="0.6" ry="1.1" transform="rotate(-16 1034.1 759.5)"/><ellipse cx="973.8" cy="858.3" rx="0.6" ry="0.7" transform="rotate(33 973.8 858.3)"/><ellipse cx="1013.6" cy="835.2" rx="4.1" ry="5.5" transform="rotate(14 1013.6 835.2)"/><ellipse cx="1002.4" cy="899.2" rx="1.1" ry="1.8" transform="rotate(40 1002.4 899.2)"/><ellipse cx="1071.8" cy="800.1" rx="0.4" ry="1.2" transform="rotate(-1 1071.8 800.1)"/><ellipse cx="942.1" cy="638.0" rx="0.3" ry="0.7" transform="rotate(-71 942.1 638.0)"/><ellipse cx="918.2" cy="663.0" rx="1.3" ry="1.9" transform="rotate(-77 918.2 663.0)"/><ellipse cx="1011.2" cy="805.9" rx="4.2" ry="5.5" transform="rotate(2 1011.2 805.9)"/><ellipse cx="965.7" cy="697.9" rx="4.1" ry="5.6" transform="rotate(-53 965.7 697.9)"/><ellipse cx="881.1" cy="617.5" rx="0.2" ry="0.7" transform="rotate(-92 881.1 617.5)"/><ellipse cx="984.1" cy="934.5" rx="0.4" ry="0.7" transform="rotate(54 984.1 934.5)"/><ellipse cx="1052.5" cy="885.5" rx="1.7" ry="5.7" transform="rotate(27 1052.5 885.5)"/><ellipse cx="1016.8" cy="719.0" rx="3.7" ry="6.2" transform="rotate(-33 1016.8 719.0)"/><ellipse cx="977.0" cy="783.4" rx="3.3" ry="3.8" transform="rotate(-12 977.0 783.4)"/><ellipse cx="942.8" cy="719.2" rx="0.6" ry="0.7" transform="rotate(-56 942.8 719.2)"/><ellipse cx="947.2" cy="724.9" rx="1.8" ry="2.1" transform="rotate(-52 947.2 724.9)"/><ellipse cx="1044.6" cy="801.4" rx="0.5" ry="0.8" transform="rotate(-0 1044.6 801.4)"/><ellipse cx="1040.6" cy="792.1" rx="1.4" ry="2.3" transform="rotate(-4 1040.6 792.1)"/><ellipse cx="989.6" cy="785.9" rx="1.8" ry="2.1" transform="rotate(-9 989.6 785.9)"/><ellipse cx="943.2" cy="726.1" rx="0.6" ry="0.7" transform="rotate(-53 943.2 726.1)"/><ellipse cx="966.2" cy="727.5" rx="0.6" ry="0.7" transform="rotate(-43 966.2 727.5)"/><ellipse cx="1002.2" cy="895.6" rx="1.2" ry="1.8" transform="rotate(39 1002.2 895.6)"/><ellipse cx="987.9" cy="722.6" rx="4.8" ry="6.4" transform="rotate(-38 987.9 722.6)"/><ellipse cx="884.9" cy="680.7" rx="0.6" ry="0.8" transform="rotate(-91 884.9 680.7)"/><ellipse cx="860.2" cy="627.0" rx="0.7" ry="1.6" transform="rotate(-99 860.2 627.0)"/><ellipse cx="1050.1" cy="707.9" rx="1.1" ry="3.7" transform="rotate(-30 1050.1 707.9)"/><ellipse cx="1041.7" cy="739.8" rx="0.5" ry="0.9" transform="rotate(-22 1041.7 739.8)"/><ellipse cx="1064.7" cy="848.1" rx="0.3" ry="0.9" transform="rotate(14 1064.7 848.1)"/><ellipse cx="970.9" cy="731.0" rx="0.8" ry="0.9" transform="rotate(-40 970.9 731.0)"/><ellipse cx="1048.7" cy="854.7" rx="3.0" ry="6.3" transform="rotate(18 1048.7 854.7)"/><ellipse cx="992.7" cy="844.3" rx="0.9" ry="1.1" transform="rotate(21 992.7 844.3)"/><ellipse cx="968.2" cy="781.8" rx="0.8" ry="0.8" transform="rotate(-14 968.2 781.8)"/><ellipse cx="1021.6" cy="866.5" rx="0.5" ry="0.7" transform="rotate(25 1021.6 866.5)"/><ellipse cx="1019.2" cy="722.2" rx="1.3" ry="2.2" transform="rotate(-31 1019.2 722.2)"/><ellipse cx="962.6" cy="767.4" rx="0.9" ry="0.9" transform="rotate(-25 962.6 767.4)"/><ellipse cx="879.8" cy="628.6" rx="2.7" ry="6.0" transform="rotate(-92 879.8 628.6)"/><ellipse cx="1021.4" cy="930.7" rx="0.2" ry="0.8" transform="rotate(44 1021.4 930.7)"/><ellipse cx="890.5" cy="623.7" rx="1.1" ry="2.7" transform="rotate(-89 890.5 623.7)"/><ellipse cx="1009.2" cy="683.2" rx="3.3" ry="6.9" transform="rotate(-44 1009.2 683.2)"/><ellipse cx="1040.9" cy="714.9" rx="1.9" ry="4.5" transform="rotate(-30 1040.9 714.9)"/><ellipse cx="997.4" cy="652.6" rx="0.6" ry="2.0" transform="rotate(-53 997.4 652.6)"/><ellipse cx="939.6" cy="747.9" rx="4.8" ry="5.3" transform="rotate(-46 939.6 747.9)"/><ellipse cx="950.2" cy="729.5" rx="0.6" ry="0.7" transform="rotate(-49 950.2 729.5)"/><ellipse cx="921.2" cy="687.3" rx="2.0" ry="2.6" transform="rotate(-73 921.2 687.3)"/><ellipse cx="876.7" cy="660.3" rx="4.2" ry="6.2" transform="rotate(-94 876.7 660.3)"/><ellipse cx="1031.1" cy="912.4" rx="0.5" ry="1.3" transform="rotate(37 1031.1 912.4)"/><ellipse cx="1038.1" cy="912.7" rx="1.0" ry="3.4" transform="rotate(36 1038.1 912.7)"/><ellipse cx="982.0" cy="789.0" rx="3.2" ry="3.7" transform="rotate(-8 982.0 789.0)"/><ellipse cx="1021.0" cy="884.9" rx="0.5" ry="0.9" transform="rotate(32 1021.0 884.9)"/><ellipse cx="982.4" cy="735.1" rx="4.3" ry="5.4" transform="rotate(-35 982.4 735.1)"/><ellipse cx="1018.8" cy="879.5" rx="3.1" ry="5.1" transform="rotate(30 1018.8 879.5)"/><ellipse cx="1021.9" cy="924.0" rx="1.0" ry="2.7" transform="rotate(42 1021.9 924.0)"/><ellipse cx="1013.1" cy="853.7" rx="0.7" ry="1.0" transform="rotate(22 1013.1 853.7)"/><ellipse cx="986.7" cy="687.6" rx="0.6" ry="1.0" transform="rotate(-49 986.7 687.6)"/><ellipse cx="856.8" cy="615.9" rx="0.3" ry="0.9" transform="rotate(-99 856.8 615.9)"/><ellipse cx="1067.2" cy="804.0" rx="1.9" ry="5.0" transform="rotate(0 1067.2 804.0)"/><ellipse cx="932.6" cy="619.9" rx="0.4" ry="1.4" transform="rotate(-76 932.6 619.9)"/><ellipse cx="901.3" cy="692.1" rx="4.2" ry="5.1" transform="rotate(-82 901.3 692.1)"/><ellipse cx="939.7" cy="639.3" rx="2.0" ry="4.2" transform="rotate(-72 939.7 639.3)"/><ellipse cx="993.0" cy="833.3" rx="0.6" ry="0.7" transform="rotate(16 993.0 833.3)"/><ellipse cx="975.6" cy="647.4" rx="2.6" ry="6.6" transform="rotate(-60 975.6 647.4)"/><ellipse cx="977.3" cy="777.2" rx="0.7" ry="0.8" transform="rotate(-16 977.3 777.2)"/><ellipse cx="940.2" cy="649.4" rx="0.4" ry="0.8" transform="rotate(-71 940.2 649.4)"/><ellipse cx="843.0" cy="621.0" rx="0.4" ry="1.3" transform="rotate(-103 843.0 621.0)"/><ellipse cx="999.8" cy="877.8" rx="1.3" ry="1.8" transform="rotate(34 999.8 877.8)"/><ellipse cx="1023.7" cy="872.4" rx="1.7" ry="2.7" transform="rotate(27 1023.7 872.4)"/><ellipse cx="903.4" cy="670.4" rx="3.0" ry="4.1" transform="rotate(-83 903.4 670.4)"/><ellipse cx="1058.1" cy="810.0" rx="0.3" ry="0.7" transform="rotate(2 1058.1 810.0)"/><ellipse cx="958.3" cy="760.6" rx="3.5" ry="3.9" transform="rotate(-30 958.3 760.6)"/><ellipse cx="1016.5" cy="745.9" rx="3.4" ry="5.0" transform="rotate(-24 1016.5 745.9)"/><ellipse cx="972.9" cy="717.3" rx="0.7" ry="0.9" transform="rotate(-45 972.9 717.3)"/><ellipse cx="948.5" cy="748.9" rx="5.5" ry="6.1" transform="rotate(-41 948.5 748.9)"/><ellipse cx="997.1" cy="662.5" rx="1.9" ry="4.7" transform="rotate(-52 997.1 662.5)"/><ellipse cx="947.2" cy="705.2" rx="0.6" ry="0.7" transform="rotate(-58 947.2 705.2)"/><ellipse cx="1000.1" cy="673.2" rx="2.6" ry="5.5" transform="rotate(-49 1000.1 673.2)"/><ellipse cx="998.7" cy="934.4" rx="0.4" ry="0.8" transform="rotate(50 998.7 934.4)"/><ellipse cx="961.6" cy="814.5" rx="3.4" ry="3.7" transform="rotate(9 961.6 814.5)"/><ellipse cx="873.7" cy="664.0" rx="1.2" ry="1.7" transform="rotate(-95 873.7 664.0)"/><ellipse cx="1019.2" cy="790.0" rx="1.6" ry="2.2" transform="rotate(-5 1019.2 790.0)"/><ellipse cx="971.5" cy="851.3" rx="0.9" ry="1.1" transform="rotate(30 971.5 851.3)"/><ellipse cx="1027.3" cy="750.4" rx="1.0" ry="1.6" transform="rotate(-20 1027.3 750.4)"/><ellipse cx="1014.1" cy="765.0" rx="1.3" ry="1.8" transform="rotate(-16 1014.1 765.0)"/><ellipse cx="1000.2" cy="736.7" rx="0.8" ry="1.0" transform="rotate(-30 1000.2 736.7)"/><ellipse cx="1036.7" cy="820.2" rx="0.4" ry="0.7" transform="rotate(7 1036.7 820.2)"/><ellipse cx="1047.7" cy="863.1" rx="0.6" ry="1.2" transform="rotate(21 1047.7 863.1)"/><ellipse cx="1012.1" cy="914.1" rx="1.1" ry="2.2" transform="rotate(42 1012.1 914.1)"/><ellipse cx="912.8" cy="623.1" rx="0.3" ry="0.7" transform="rotate(-82 912.8 623.1)"/><ellipse cx="1007.3" cy="831.8" rx="4.5" ry="5.9" transform="rotate(14 1007.3 831.8)"/><ellipse cx="865.7" cy="613.3" rx="0.4" ry="1.3" transform="rotate(-96 865.7 613.3)"/><ellipse cx="971.9" cy="702.1" rx="2.7" ry="3.6" transform="rotate(-50 971.9 702.1)"/><ellipse cx="993.2" cy="885.7" rx="3.6" ry="5.0" transform="rotate(38 993.2 885.7)"/><ellipse cx="976.0" cy="640.6" rx="0.8" ry="2.6" transform="rotate(-61 976.0 640.6)"/><ellipse cx="968.0" cy="787.1" rx="5.5" ry="6.1" transform="rotate(-11 968.0 787.1)"/><ellipse cx="881.2" cy="631.1" rx="0.6" ry="1.2" transform="rotate(-92 881.2 631.1)"/><ellipse cx="1002.3" cy="749.3" rx="2.1" ry="2.8" transform="rotate(-25 1002.3 749.3)"/><ellipse cx="937.0" cy="770.6" rx="1.2" ry="1.2" transform="rotate(-32 937.0 770.6)"/><ellipse cx="997.3" cy="828.5" rx="0.8" ry="1.0" transform="rotate(13 997.3 828.5)"/><ellipse cx="925.9" cy="728.0" rx="1.3" ry="1.4" transform="rotate(-62 925.9 728.0)"/><ellipse cx="1037.6" cy="754.5" rx="1.8" ry="3.1" transform="rotate(-18 1037.6 754.5)"/><ellipse cx="1007.9" cy="945.5" rx="0.7" ry="2.2" transform="rotate(50 1007.9 945.5)"/><ellipse cx="1047.6" cy="742.9" rx="0.3" ry="0.7" transform="rotate(-20 1047.6 742.9)"/><ellipse cx="992.5" cy="698.5" rx="1.5" ry="2.3" transform="rotate(-44 992.5 698.5)"/><ellipse cx="968.1" cy="859.6" rx="6.0" ry="7.0" transform="rotate(35 968.1 859.6)"/><ellipse cx="955.4" cy="724.1" rx="2.0" ry="2.4" transform="rotate(-49 955.4 724.1)"/><ellipse cx="986.9" cy="648.9" rx="0.3" ry="1.0" transform="rotate(-57 986.9 648.9)"/><ellipse cx="971.1" cy="683.8" rx="0.5" ry="0.7" transform="rotate(-55 971.1 683.8)"/><ellipse cx="866.0" cy="645.6" rx="3.5" ry="6.1" transform="rotate(-97 866.0 645.6)"/><ellipse cx="1019.8" cy="852.5" rx="1.0" ry="1.5" transform="rotate(21 1019.8 852.5)"/><ellipse cx="907.3" cy="664.2" rx="3.6" ry="5.2" transform="rotate(-81 907.3 664.2)"/><ellipse cx="1018.7" cy="738.1" rx="0.5" ry="0.8" transform="rotate(-26 1018.7 738.1)"/><ellipse cx="1040.3" cy="868.0" rx="0.4" ry="0.8" transform="rotate(23 1040.3 868.0)"/><ellipse cx="974.7" cy="722.1" rx="5.4" ry="6.8" transform="rotate(-42 974.7 722.1)"/><ellipse cx="896.9" cy="680.2" rx="1.1" ry="1.4" transform="rotate(-85 896.9 680.2)"/><ellipse cx="914.3" cy="661.6" rx="0.5" ry="0.8" transform="rotate(-79 914.3 661.6)"/><ellipse cx="991.8" cy="884.9" rx="0.6" ry="0.8" transform="rotate(38 991.8 884.9)"/><ellipse cx="977.1" cy="766.7" rx="3.0" ry="3.5" transform="rotate(-22 977.1 766.7)"/><ellipse cx="1015.6" cy="750.7" rx="0.5" ry="0.8" transform="rotate(-22 1015.6 750.7)"/><ellipse cx="1009.8" cy="944.8" rx="0.3" ry="1.0" transform="rotate(49 1009.8 944.8)"/><ellipse cx="968.7" cy="756.3" rx="3.3" ry="3.8" transform="rotate(-29 968.7 756.3)"/><ellipse cx="1063.3" cy="800.5" rx="0.8" ry="1.8" transform="rotate(-1 1063.3 800.5)"/><ellipse cx="1056.9" cy="759.2" rx="0.6" ry="1.4" transform="rotate(-14 1056.9 759.2)"/><ellipse cx="1018.8" cy="812.5" rx="0.9" ry="1.3" transform="rotate(4 1018.8 812.5)"/><ellipse cx="968.4" cy="787.3" rx="1.9" ry="2.1" transform="rotate(-11 968.4 787.3)"/><ellipse cx="1027.4" cy="700.7" rx="1.0" ry="2.1" transform="rotate(-36 1027.4 700.7)"/><ellipse cx="992.5" cy="669.5" rx="0.3" ry="0.7" transform="rotate(-51 992.5 669.5)"/><ellipse cx="1031.1" cy="779.1" rx="0.5" ry="0.7" transform="rotate(-9 1031.1 779.1)"/><ellipse cx="979.4" cy="668.0" rx="0.6" ry="1.1" transform="rotate(-55 979.4 668.0)"/><ellipse cx="1011.6" cy="809.4" rx="2.8" ry="3.7" transform="rotate(3 1011.6 809.4)"/><ellipse cx="981.2" cy="903.6" rx="1.2" ry="1.6" transform="rotate(47 981.2 903.6)"/><ellipse cx="997.5" cy="883.7" rx="4.1" ry="5.9" transform="rotate(36 997.5 883.7)"/><ellipse cx="993.0" cy="817.5" rx="6.0" ry="7.2" transform="rotate(8 993.0 817.5)"/><ellipse cx="955.2" cy="812.3" rx="0.7" ry="0.7" transform="rotate(8 955.2 812.3)"/><ellipse cx="1013.5" cy="807.4" rx="0.5" ry="0.7" transform="rotate(2 1013.5 807.4)"/><ellipse cx="1040.1" cy="876.4" rx="2.2" ry="4.6" transform="rotate(26 1040.1 876.4)"/><ellipse cx="888.4" cy="681.0" rx="0.6" ry="0.8" transform="rotate(-89 888.4 681.0)"/><ellipse cx="939.7" cy="624.3" rx="0.4" ry="1.3" transform="rotate(-73 939.7 624.3)"/><ellipse cx="998.5" cy="727.2" rx="2.3" ry="3.2" transform="rotate(-34 998.5 727.2)"/><ellipse cx="1019.7" cy="836.1" rx="2.1" ry="3.0" transform="rotate(14 1019.7 836.1)"/><ellipse cx="1038.6" cy="834.7" rx="3.9" ry="6.5" transform="rotate(12 1038.6 834.7)"/><ellipse cx="910.5" cy="652.5" rx="1.2" ry="2.0" transform="rotate(-81 910.5 652.5)"/><ellipse cx="1013.4" cy="744.6" rx="0.6" ry="0.9" transform="rotate(-25 1013.4 744.6)"/><ellipse cx="950.5" cy="740.7" rx="0.7" ry="0.8" transform="rotate(-44 950.5 740.7)"/><ellipse cx="966.7" cy="643.9" rx="0.4" ry="0.9" transform="rotate(-63 966.7 643.9)"/><ellipse cx="966.9" cy="709.3" rx="4.4" ry="5.6" transform="rotate(-49 966.9 709.3)"/><ellipse cx="1023.2" cy="732.8" rx="1.8" ry="2.9" transform="rotate(-27 1023.2 732.8)"/><ellipse cx="950.2" cy="744.6" rx="1.2" ry="1.4" transform="rotate(-42 950.2 744.6)"/><ellipse cx="1047.2" cy="893.6" rx="1.1" ry="3.4" transform="rotate(30 1047.2 893.6)"/><ellipse cx="940.4" cy="677.8" rx="3.5" ry="4.8" transform="rotate(-67 940.4 677.8)"/><ellipse cx="958.3" cy="743.7" rx="0.6" ry="0.7" transform="rotate(-39 958.3 743.7)"/><ellipse cx="1016.7" cy="910.2" rx="0.5" ry="1.0" transform="rotate(40 1016.7 910.2)"/><ellipse cx="928.3" cy="626.2" rx="0.3" ry="0.9" transform="rotate(-77 928.3 626.2)"/><ellipse cx="983.7" cy="641.3" rx="1.0" ry="3.2" transform="rotate(-59 983.7 641.3)"/><ellipse cx="1015.0" cy="852.4" rx="1.1" ry="1.5" transform="rotate(21 1015.0 852.4)"/><ellipse cx="1069.3" cy="856.0" rx="0.6" ry="2.0" transform="rotate(16 1069.3 856.0)"/><ellipse cx="987.9" cy="673.7" rx="1.6" ry="3.0" transform="rotate(-52 987.9 673.7)"/><ellipse cx="1049.9" cy="858.8" rx="1.2" ry="2.6" transform="rotate(19 1049.9 858.8)"/><ellipse cx="1056.0" cy="861.9" rx="0.3" ry="0.9" transform="rotate(19 1056.0 861.9)"/><ellipse cx="1018.7" cy="723.2" rx="0.5" ry="0.8" transform="rotate(-31 1018.7 723.2)"/><ellipse cx="997.3" cy="931.2" rx="1.8" ry="3.7" transform="rotate(49 997.3 931.2)"/><ellipse cx="918.1" cy="639.0" rx="1.6" ry="3.2" transform="rotate(-79 918.1 639.0)"/><ellipse cx="1024.9" cy="914.2" rx="0.6" ry="1.4" transform="rotate(39 1024.9 914.2)"/><ellipse cx="1066.3" cy="849.2" rx="1.3" ry="4.5" transform="rotate(15 1066.3 849.2)"/><ellipse cx="949.0" cy="752.7" rx="2.1" ry="2.3" transform="rotate(-39 949.0 752.7)"/><ellipse cx="1038.4" cy="821.2" rx="0.4" ry="0.7" transform="rotate(7 1038.4 821.2)"/><ellipse cx="1027.5" cy="706.5" rx="0.3" ry="0.7" transform="rotate(-34 1027.5 706.5)"/><ellipse cx="920.9" cy="639.0" rx="0.7" ry="1.3" transform="rotate(-78 920.9 639.0)"/><ellipse cx="972.8" cy="647.6" rx="1.9" ry="4.7" transform="rotate(-61 972.8 647.6)"/><ellipse cx="993.6" cy="661.1" rx="1.7" ry="4.1" transform="rotate(-53 993.6 661.1)"/><ellipse cx="923.2" cy="690.8" rx="0.8" ry="1.0" transform="rotate(-72 923.2 690.8)"/><ellipse cx="967.3" cy="773.7" rx="4.9" ry="5.5" transform="rotate(-20 967.3 773.7)"/><ellipse cx="982.1" cy="740.7" rx="3.2" ry="3.9" transform="rotate(-33 982.1 740.7)"/><ellipse cx="926.9" cy="646.6" rx="1.2" ry="2.1" transform="rotate(-75 926.9 646.6)"/><ellipse cx="1052.1" cy="870.7" rx="0.3" ry="0.9" transform="rotate(22 1052.1 870.7)"/><ellipse cx="877.1" cy="669.4" rx="3.6" ry="4.9" transform="rotate(-94 877.1 669.4)"/><ellipse cx="993.3" cy="854.3" rx="2.1" ry="2.7" transform="rotate(26 993.3 854.3)"/><ellipse cx="1057.3" cy="873.1" rx="0.3" ry="1.0" transform="rotate(22 1057.3 873.1)"/><ellipse cx="989.0" cy="895.8" rx="1.3" ry="1.8" transform="rotate(42 989.0 895.8)"/><ellipse cx="939.2" cy="744.3" rx="1.9" ry="2.1" transform="rotate(-48 939.2 744.3)"/><ellipse cx="849.9" cy="631.3" rx="0.5" ry="1.1" transform="rotate(-102 849.9 631.3)"/><ellipse cx="1056.8" cy="740.4" rx="2.2" ry="6.0" transform="rotate(-20 1056.8 740.4)"/><ellipse cx="919.0" cy="639.0" rx="0.4" ry="0.8" transform="rotate(-79 919.0 639.0)"/><ellipse cx="944.2" cy="684.4" rx="2.7" ry="3.6" transform="rotate(-64 944.2 684.4)"/><ellipse cx="1066.8" cy="841.8" rx="0.2" ry="0.7" transform="rotate(12 1066.8 841.8)"/><ellipse cx="1007.0" cy="948.7" rx="0.3" ry="1.1" transform="rotate(51 1007.0 948.7)"/><ellipse cx="983.6" cy="860.5" rx="1.1" ry="1.3" transform="rotate(31 983.6 860.5)"/><ellipse cx="956.2" cy="739.3" rx="0.6" ry="0.7" transform="rotate(-42 956.2 739.3)"/><ellipse cx="853.1" cy="625.5" rx="1.0" ry="2.6" transform="rotate(-101 853.1 625.5)"/><ellipse cx="872.2" cy="613.1" rx="1.8" ry="6.0" transform="rotate(-94 872.2 613.1)"/><ellipse cx="943.1" cy="764.3" rx="4.8" ry="5.1" transform="rotate(-34 943.1 764.3)"/><ellipse cx="1059.8" cy="852.0" rx="0.3" ry="0.8" transform="rotate(16 1059.8 852.0)"/><ellipse cx="913.6" cy="668.8" rx="3.7" ry="5.1" transform="rotate(-79 913.6 668.8)"/><ellipse cx="1030.3" cy="711.9" rx="1.9" ry="3.8" transform="rotate(-32 1030.3 711.9)"/><ellipse cx="1012.2" cy="717.8" rx="0.7" ry="1.1" transform="rotate(-34 1012.2 717.8)"/><ellipse cx="1028.0" cy="678.8" rx="1.5" ry="5.1" transform="rotate(-41 1028.0 678.8)"/><ellipse cx="978.4" cy="645.8" rx="0.3" ry="0.8" transform="rotate(-60 978.4 645.8)"/><ellipse cx="957.7" cy="642.9" rx="0.5" ry="1.1" transform="rotate(-66 957.7 642.9)"/><ellipse cx="1049.5" cy="886.7" rx="1.8" ry="5.4" transform="rotate(27 1049.5 886.7)"/><ellipse cx="1035.7" cy="892.6" rx="0.4" ry="0.9" transform="rotate(31 1035.7 892.6)"/><ellipse cx="971.3" cy="763.3" rx="0.9" ry="1.0" transform="rotate(-25 971.3 763.3)"/><ellipse cx="1020.1" cy="913.1" rx="2.6" ry="5.8" transform="rotate(40 1020.1 913.1)"/><ellipse cx="982.4" cy="940.1" rx="0.9" ry="1.8" transform="rotate(55 982.4 940.1)"/><ellipse cx="969.1" cy="761.0" rx="1.7" ry="1.9" transform="rotate(-27 969.1 761.0)"/><ellipse cx="903.3" cy="694.7" rx="2.1" ry="2.5" transform="rotate(-81 903.3 694.7)"/><ellipse cx="1052.9" cy="813.7" rx="1.0" ry="1.9" transform="rotate(4 1052.9 813.7)"/><ellipse cx="1011.8" cy="787.0" rx="2.1" ry="2.7" transform="rotate(-7 1011.8 787.0)"/><ellipse cx="1004.6" cy="810.8" rx="1.2" ry="1.5" transform="rotate(4 1004.6 810.8)"/><ellipse cx="914.0" cy="630.3" rx="0.3" ry="0.8" transform="rotate(-81 914.0 630.3)"/><ellipse cx="971.5" cy="714.7" rx="0.8" ry="1.0" transform="rotate(-46 971.5 714.7)"/><ellipse cx="1026.3" cy="686.3" rx="0.5" ry="1.4" transform="rotate(-40 1026.3 686.3)"/><ellipse cx="1000.3" cy="848.4" rx="0.9" ry="1.2" transform="rotate(22 1000.3 848.4)"/><ellipse cx="969.0" cy="752.8" rx="2.6" ry="3.0" transform="rotate(-31 969.0 752.8)"/><ellipse cx="1018.7" cy="769.4" rx="1.2" ry="1.6" transform="rotate(-14 1018.7 769.4)"/><ellipse cx="1038.5" cy="779.1" rx="1.1" ry="1.7" transform="rotate(-9 1038.5 779.1)"/><ellipse cx="848.2" cy="623.6" rx="1.1" ry="3.1" transform="rotate(-102 848.2 623.6)"/><ellipse cx="960.9" cy="770.5" rx="2.1" ry="2.3" transform="rotate(-23 960.9 770.5)"/><ellipse cx="1026.2" cy="824.2" rx="1.3" ry="1.8" transform="rotate(9 1026.2 824.2)"/><ellipse cx="855.4" cy="627.7" rx="0.4" ry="1.0" transform="rotate(-100 855.4 627.7)"/><ellipse cx="1029.3" cy="920.1" rx="1.6" ry="5.0" transform="rotate(39 1029.3 920.1)"/><ellipse cx="908.4" cy="627.7" rx="0.4" ry="1.0" transform="rotate(-83 908.4 627.7)"/><ellipse cx="1004.3" cy="838.4" rx="1.2" ry="1.5" transform="rotate(17 1004.3 838.4)"/><ellipse cx="1055.8" cy="781.0" rx="2.6" ry="5.3" transform="rotate(-7 1055.8 781.0)"/><ellipse cx="924.0" cy="678.0" rx="4.4" ry="6.0" transform="rotate(-73 924.0 678.0)"/><ellipse cx="954.6" cy="722.6" rx="0.7" ry="0.8" transform="rotate(-50 954.6 722.6)"/><ellipse cx="958.9" cy="668.1" rx="0.4" ry="0.7" transform="rotate(-62 958.9 668.1)"/><ellipse cx="1017.4" cy="722.1" rx="0.5" ry="0.8" transform="rotate(-32 1017.4 722.1)"/><ellipse cx="918.5" cy="731.9" rx="2.0" ry="2.1" transform="rotate(-66 918.5 731.9)"/><ellipse cx="904.3" cy="644.2" rx="0.9" ry="1.6" transform="rotate(-84 904.3 644.2)"/><ellipse cx="975.4" cy="775.2" rx="2.7" ry="3.1" transform="rotate(-17 975.4 775.2)"/><ellipse cx="1028.2" cy="840.6" rx="1.3" ry="2.0" transform="rotate(15 1028.2 840.6)"/><ellipse cx="947.5" cy="627.3" rx="0.3" ry="1.1" transform="rotate(-71 947.5 627.3)"/><ellipse cx="998.5" cy="723.9" rx="0.5" ry="0.7" transform="rotate(-35 998.5 723.9)"/><ellipse cx="909.5" cy="645.1" rx="1.2" ry="2.1" transform="rotate(-82 909.5 645.1)"/><ellipse cx="998.6" cy="839.7" rx="1.2" ry="1.6" transform="rotate(18 998.6 839.7)"/><ellipse cx="950.0" cy="671.6" rx="0.5" ry="0.8" transform="rotate(-64 950.0 671.6)"/><ellipse cx="1058.4" cy="736.9" rx="1.6" ry="4.9" transform="rotate(-21 1058.4 736.9)"/><ellipse cx="1031.9" cy="794.8" rx="0.5" ry="0.7" transform="rotate(-3 1031.9 794.8)"/><ellipse cx="1059.1" cy="798.0" rx="2.0" ry="4.2" transform="rotate(-1 1059.1 798.0)"/><ellipse cx="917.1" cy="698.9" rx="2.0" ry="2.4" transform="rotate(-74 917.1 698.9)"/><ellipse cx="997.1" cy="884.6" rx="0.5" ry="0.7" transform="rotate(37 997.1 884.6)"/><ellipse cx="1007.4" cy="787.6" rx="4.6" ry="5.9" transform="rotate(-7 1007.4 787.6)"/><ellipse cx="977.5" cy="872.1" rx="0.6" ry="0.7" transform="rotate(37 977.5 872.1)"/><ellipse cx="984.4" cy="855.6" rx="0.7" ry="0.8" transform="rotate(28 984.4 855.6)"/><ellipse cx="971.2" cy="743.8" rx="0.6" ry="0.8" transform="rotate(-35 971.2 743.8)"/><ellipse cx="982.1" cy="660.3" rx="2.2" ry="4.7" transform="rotate(-56 982.1 660.3)"/><ellipse cx="981.9" cy="932.0" rx="2.5" ry="4.4" transform="rotate(54 981.9 932.0)"/><ellipse cx="1030.9" cy="724.2" rx="3.5" ry="6.6" transform="rotate(-28 1030.9 724.2)"/><ellipse cx="998.4" cy="705.9" rx="3.1" ry="4.8" transform="rotate(-41 998.4 705.9)"/><ellipse cx="1008.1" cy="770.8" rx="1.9" ry="2.5" transform="rotate(-15 1008.1 770.8)"/><ellipse cx="1020.7" cy="848.9" rx="0.7" ry="1.0" transform="rotate(19 1020.7 848.9)"/><ellipse cx="1015.2" cy="671.0" rx="0.6" ry="1.9" transform="rotate(-46 1015.2 671.0)"/><ellipse cx="1059.8" cy="784.8" rx="2.0" ry="4.5" transform="rotate(-6 1059.8 784.8)"/><ellipse cx="1027.6" cy="807.9" rx="0.8" ry="1.2" transform="rotate(2 1027.6 807.9)"/><ellipse cx="951.3" cy="637.4" rx="1.1" ry="2.6" transform="rotate(-69 951.3 637.4)"/><ellipse cx="937.9" cy="754.2" rx="1.8" ry="1.9" transform="rotate(-43 937.9 754.2)"/><ellipse cx="1016.9" cy="874.0" rx="1.4" ry="2.1" transform="rotate(29 1016.9 874.0)"/></g>
<g fill="none" stroke="#96665c" stroke-width="2.4" stroke-linejoin="round"><path d="M842.0 634.0 L844.7 633.5 L846.8 631.5 L849.2 630.2 L852.0 630.0 L855.0 630.0 L857.8 629.0 L860.5 627.9 L863.1 626.5 L866.0 626.0 L868.7 624.8 L871.7 624.9 L874.4 623.9 L877.3 623.2 L880.0 622.2 L882.8 622.5 L885.6 622.2 L888.0 624.5 L891.1 625.9 L893.2 627.8 L894.5 630.1 L894.7 633.2 L896.3 635.3 L898.5 637.0 L899.2 639.8 L902.2 641.1 L903.5 643.5 L904.1 646.3 L907.9 646.7 L911.5 648.1 L914.1 647.6 L916.7 647.7 L919.1 646.2 L921.9 646.8 L924.4 646.3 L927.7 646.0 L930.8 646.6 L933.7 648.1 L935.8 650.3 L938.3 651.9 L940.5 653.9 L943.0 655.6 L942.3 658.4 L941.1 661.1 L938.7 662.4 L936.5 664.1 L933.7 664.8 L934.7 667.8 L934.4 671.1 L935.6 674.1 L936.9 676.5 L939.9 677.1 L941.7 679.0 L943.0 681.5 L944.3 683.8 L946.5 685.4 L948.5 687.0 L949.2 690.3 L951.6 693.0 L952.2 696.3 L955.1 698.5 L957.8 700.9 L961.4 699.9 L965.2 700.0 L965.4 697.1 L964.0 694.5 L964.1 691.6 L963.3 688.9 L965.0 686.0 L964.2 682.6 L965.2 679.6 L967.9 681.6 L970.7 683.3 L972.9 685.6 L975.1 687.8 L978.1 688.9 L980.1 690.6 L982.1 692.4 L983.7 694.4 L986.2 696.2 L986.8 699.6 L990.0 700.8 L991.1 703.7 L994.5 704.1 L997.2 706.3 L1000.4 707.4 L1003.5 708.6 L1006.4 710.3 L1009.6 711.1 L1012.3 711.9 L1014.3 714.1 L1017.0 714.8 L1019.9 715.2 L1022.3 716.7 L1024.4 718.5 L1027.4 720.1 L1031.0 720.1 L1033.7 722.2 L1036.9 722.4 L1039.8 723.9 L1043.0 724.1 L1046.1 723.9 L1049.0 722.4 L1052.2 722.2 L1054.6 723.5 L1056.1 725.7 L1057.8 727.8 L1057.3 730.9 L1058.1 734.0 L1057.8 737.0 L1057.7 740.9 L1055.9 744.4 L1056.9 747.0 L1058.6 749.2 L1059.3 751.9 L1061.5 753.7 L1061.9 756.6 L1063.1 759.0 L1065.2 761.1 L1065.3 764.1 L1064.5 767.0 L1065.6 770.0 L1065.6 773.0 L1065.2 775.9 L1064.8 779.1 L1063.0 781.9 L1063.3 785.2 L1062.1 788.0 L1063.1 791.2 L1062.5 794.1 L1062.1 797.1 L1061.5 800.0"/><path d="M864.0 652.0 L866.5 650.4 L869.2 649.1 L872.0 648.0 L873.4 645.7 L874.7 643.2 L876.9 641.5 L878.9 639.6 L880.0 637.0 L883.7 637.1 L887.4 637.0 L888.2 639.7 L890.1 641.7 L892.2 643.6 L893.0 646.3 L893.0 649.5 L893.4 652.6 L894.8 655.6 L897.1 658.1 L898.5 661.1 L901.5 661.4 L903.4 663.6 L905.9 664.8 L904.9 667.6 L904.1 670.4 L901.0 670.2 L897.9 669.3 L894.8 670.4 L891.2 669.1 L887.4 668.5 L883.5 668.8 L880.0 670.4"/><path d="M994.8 663.0 L997.8 662.0 L1000.7 663.1 L1003.7 663.6 L1006.7 662.0 L1009.6 663.0 L1012.4 663.7 L1013.8 666.4 L1015.8 668.1 L1019.0 668.1 L1020.7 670.4 L1022.4 672.4 L1025.0 673.5 L1025.9 676.3 L1028.1 677.8 L1029.4 680.2 L1031.6 681.9 L1033.1 684.1 L1033.6 687.0 L1035.6 688.9 L1035.1 691.5 L1034.2 694.0 L1034.7 696.7 L1034.4 699.3 L1033.7 701.9 L1030.4 701.5 L1027.5 702.7 L1024.4 703.7 L1021.7 702.8 L1018.9 701.8 L1016.3 700.5 L1013.3 700.0 L1011.3 698.2 L1009.2 696.4 L1006.3 696.0 L1004.1 694.4 L1003.3 691.8 L1001.6 689.6 L1000.6 687.1 L998.5 685.2 L998.2 682.2 L997.4 679.4 L996.6 676.6 L994.8 674.1 L995.8 671.3 L995.1 668.5 L994.9 665.7 L994.8 663.0Z"/><path d="M1044.8 701.9 L1047.7 701.8 L1050.4 700.9 L1051.0 704.0 L1053.0 706.4 L1054.1 709.3 L1053.0 711.8 L1052.3 714.5 L1050.4 716.7 L1048.9 714.4 L1047.4 712.2 L1044.8 711.1 L1044.5 708.0 L1044.1 704.9 L1044.8 701.9Z"/><path d="M909.6 718.5 L912.9 717.9 L916.1 718.4 L919.4 718.1 L922.6 718.5 L925.3 719.2 L927.6 716.8 L930.3 717.0 L932.8 716.2 L935.6 716.7 L937.1 719.6 L939.3 722.2 L936.9 724.3 L936.1 727.6 L933.7 729.6 L936.0 732.0 L936.6 735.1 L937.7 738.0 L939.3 740.7 L939.5 743.7 L942.4 745.5 L943.4 748.2 L944.3 750.8 L944.8 753.7 L947.2 755.6 L949.0 758.0 L950.0 760.9 L952.2 763.0 L954.8 763.9 L957.6 763.9 L960.2 764.5 L962.7 765.5 L965.2 766.7 L967.9 766.3 L970.3 768.0 L973.0 767.4 L975.5 768.3 L978.1 768.5 L978.7 771.9 L980.7 774.7 L981.9 777.8 L983.3 781.4 L983.7 785.2 L985.0 787.6 L986.8 789.5 L989.3 790.7 L992.3 790.4 L995.4 790.8 L998.5 790.7 L1001.6 789.7 L1003.4 787.0 L1005.9 785.2 L1006.6 782.4 L1007.5 779.8 L1009.6 777.8 L1010.0 780.7 L1011.5 783.0 L1013.3 785.2 L1014.3 788.1 L1014.8 791.1 L1015.5 794.1 L1016.8 796.9 L1017.0 800.0"/><path d="M991.1 748.1 L994.1 748.7 L996.7 747.6 L999.3 746.2 L1002.2 746.3 L1005.0 745.2 L1007.8 746.2 L1010.6 746.0 L1013.3 746.3 L1014.7 748.6 L1016.7 750.3 L1018.7 752.0 L1020.7 753.7 L1022.7 756.5 L1023.9 759.6 L1024.4 763.0 L1026.0 765.9 L1027.4 768.9 L1028.1 772.2 L1030.1 774.7 L1033.1 776.0 L1035.6 777.8 L1038.3 778.5 L1040.9 779.8 L1044.0 778.7 L1046.7 779.6 L1050.4 780.6 L1054.1 781.5 L1055.3 784.1 L1054.4 787.1 L1056.5 789.6 L1055.9 792.6 L1054.1 794.7 L1052.8 797.2 L1052.2 800.0"/><path d="M991.1 748.1 L990.8 750.8 L992.8 753.2 L992.7 755.9 L992.1 758.6 L993.0 761.1 L994.9 763.4 L995.2 766.3 L996.4 768.9 L996.5 771.9 L998.5 774.1 L998.8 776.9 L998.7 779.8 L1000.3 782.3 L1000.4 785.2 L1000.1 788.2 L1001.3 791.1 L1000.6 794.2 L1002.7 796.9 L1002.2 800.0"/><path d="M1006.4 790.0 L1006.2 793.0 L1008.0 795.7 L1007.7 798.8 L1008.3 801.7 L1009.2 804.1 L1011.0 806.2 L1010.6 809.2 L1012.2 811.4 L1015.3 812.0 L1018.2 812.9 L1021.3 813.4 L1023.9 815.3 L1026.2 813.0 L1029.0 811.3 L1031.7 809.4 L1033.1 806.7 L1033.3 803.5 L1035.0 800.8 L1035.6 797.8 L1036.1 794.8 L1037.9 792.5 L1039.4 790.0"/><path d="M1043.3 790.0 L1044.4 792.9 L1044.3 796.2 L1045.6 799.0 L1047.2 801.7 L1046.4 804.5 L1047.3 807.7 L1046.0 810.5 L1045.3 813.3 L1046.8 816.2 L1049.6 818.2 L1051.1 821.1 L1053.0 823.2 L1055.0 825.0 L1056.2 822.4 L1056.6 819.3 L1058.9 817.2 L1060.6 814.9 L1060.8 812.2 L1060.2 809.3 L1061.7 806.9 L1061.7 804.1 L1062.8 801.7 L1063.0 798.7 L1063.8 795.8 L1063.8 792.8 L1064.7 790.0"/><path d="M924.4 600.0 L927.4 601.1 L930.1 602.6 L932.6 604.5 L935.6 605.6 L938.6 605.8 L941.6 606.4 L944.3 608.3 L947.5 608.2 L950.4 609.3 L952.8 610.6 L955.5 610.1 L958.1 610.9 L960.8 610.4 L963.3 611.1 L966.7 610.5 L969.2 607.8 L972.6 607.4"/></g>
<path d="M1038.5 924.2 L1039.1 921.1 L1040.4 918.3 L1042.9 916.2 L1044.3 913.5 L1045.3 910.6 L1046.3 907.9 L1048.3 905.9 L1050.7 904.2 L1051.9 901.6 L1052.6 898.7 L1055.0 896.9 L1055.9 894.1 L1057.1 891.6 L1058.4 889.0 L1060.4 886.8 L1061.1 884.0 L1064.1 882.4 L1064.7 879.4" fill="none" stroke="#b07880" stroke-width="3.5"/>
</g>
<path d="M812.1 622.6 A194.7 194.7 0 0 0 960.9 982.4 A194.7 55 67.5 0 0 812.1 622.6Z" fill="#2a2900"/>
<g clip-path="url(#dc)">
<g fill="#474500"><ellipse cx="817.9" cy="666.5" rx="1.9" ry="3.1" transform="rotate(-117 817.9 666.5)"/><ellipse cx="706.4" cy="776.7" rx="0.3" ry="0.8" transform="rotate(-172 706.4 776.7)"/><ellipse cx="857.1" cy="929.8" rx="0.6" ry="0.8" transform="rotate(103 857.1 929.8)"/><ellipse cx="936.1" cy="976.8" rx="0.9" ry="2.5" transform="rotate(74 936.1 976.8)"/><ellipse cx="772.0" cy="872.7" rx="1.1" ry="1.6" transform="rotate(148 772.0 872.7)"/><ellipse cx="896.3" cy="948.6" rx="2.6" ry="3.9" transform="rotate(86 896.3 948.6)"/><ellipse cx="869.4" cy="934.9" rx="5.1" ry="6.9" transform="rotate(97 869.4 934.9)"/><ellipse cx="871.6" cy="673.2" rx="0.6" ry="0.8" transform="rotate(-97 871.6 673.2)"/><ellipse cx="844.0" cy="947.1" rx="0.5" ry="0.8" transform="rotate(106 844.0 947.1)"/><ellipse cx="773.1" cy="671.0" rx="0.5" ry="1.2" transform="rotate(-131 773.1 671.0)"/><ellipse cx="878.5" cy="862.1" rx="4.5" ry="4.8" transform="rotate(98 878.5 862.1)"/><ellipse cx="877.9" cy="677.3" rx="3.5" ry="4.6" transform="rotate(-94 877.9 677.3)"/><ellipse cx="828.2" cy="821.4" rx="0.8" ry="0.8" transform="rotate(162 828.2 821.4)"/><ellipse cx="855.0" cy="658.8" rx="4.2" ry="6.4" transform="rotate(-102 855.0 658.8)"/><ellipse cx="893.6" cy="824.1" rx="4.5" ry="4.6" transform="rotate(72 893.6 824.1)"/><ellipse cx="964.1" cy="949.1" rx="3.6" ry="6.9" transform="rotate(62 964.1 949.1)"/><ellipse cx="909.7" cy="975.1" rx="2.4" ry="5.3" transform="rotate(82 909.7 975.1)"/><ellipse cx="751.9" cy="886.7" rx="1.9" ry="3.2" transform="rotate(148 751.9 886.7)"/><ellipse cx="768.0" cy="731.8" rx="2.7" ry="3.8" transform="rotate(-149 768.0 731.8)"/><ellipse cx="907.5" cy="779.3" rx="0.8" ry="0.8" transform="rotate(-48 907.5 779.3)"/><ellipse cx="726.7" cy="763.4" rx="0.4" ry="0.8" transform="rotate(-166 726.7 763.4)"/><ellipse cx="936.1" cy="893.6" rx="4.2" ry="4.9" transform="rotate(61 936.1 893.6)"/><ellipse cx="957.7" cy="877.8" rx="0.8" ry="0.9" transform="rotate(47 957.7 877.8)"/><ellipse cx="870.5" cy="927.1" rx="5.6" ry="7.3" transform="rotate(97 870.5 927.1)"/><ellipse cx="825.7" cy="730.9" rx="4.7" ry="5.3" transform="rotate(-130 825.7 730.9)"/><ellipse cx="921.2" cy="748.3" rx="1.5" ry="1.6" transform="rotate(-57 921.2 748.3)"/><ellipse cx="937.5" cy="963.5" rx="3.4" ry="6.9" transform="rotate(72 937.5 963.5)"/><ellipse cx="867.0" cy="662.2" rx="0.6" ry="0.9" transform="rotate(-98 867.0 662.2)"/><ellipse cx="825.0" cy="643.3" rx="0.5" ry="0.9" transform="rotate(-111 825.0 643.3)"/><ellipse cx="913.6" cy="953.3" rx="2.6" ry="4.2" transform="rotate(80 913.6 953.3)"/><ellipse cx="887.8" cy="853.0" rx="5.4" ry="5.6" transform="rotate(88 887.8 853.0)"/><ellipse cx="957.4" cy="974.4" rx="1.1" ry="3.8" transform="rotate(68 957.4 974.4)"/><ellipse cx="789.8" cy="855.6" rx="3.0" ry="3.6" transform="rotate(151 789.8 855.6)"/><ellipse cx="885.8" cy="870.4" rx="1.4" ry="1.5" transform="rotate(91 885.8 870.4)"/><ellipse cx="951.7" cy="968.1" rx="0.4" ry="0.9" transform="rotate(69 951.7 968.1)"/><ellipse cx="813.2" cy="927.1" rx="0.6" ry="0.9" transform="rotate(120 813.2 927.1)"/><ellipse cx="854.2" cy="866.9" rx="6.5" ry="7.0" transform="rotate(117 854.2 866.9)"/><ellipse cx="836.9" cy="965.9" rx="0.4" ry="0.9" transform="rotate(107 836.9 965.9)"/><ellipse cx="851.8" cy="923.9" rx="3.3" ry="4.4" transform="rotate(106 851.8 923.9)"/><ellipse cx="876.8" cy="980.4" rx="2.9" ry="7.1" transform="rotate(93 876.8 980.4)"/><ellipse cx="816.2" cy="748.7" rx="4.0" ry="4.5" transform="rotate(-143 816.2 748.7)"/><ellipse cx="768.6" cy="901.0" rx="0.6" ry="1.0" transform="rotate(140 768.6 901.0)"/><ellipse cx="837.0" cy="895.2" rx="0.7" ry="0.9" transform="rotate(118 837.0 895.2)"/><ellipse cx="733.0" cy="839.9" rx="1.7" ry="2.8" transform="rotate(166 733.0 839.9)"/><ellipse cx="925.2" cy="861.5" rx="0.8" ry="0.9" transform="rotate(57 925.2 861.5)"/><ellipse cx="819.2" cy="871.9" rx="0.7" ry="0.9" transform="rotate(134 819.2 871.9)"/><ellipse cx="771.0" cy="917.5" rx="1.2" ry="2.3" transform="rotate(135 771.0 917.5)"/><ellipse cx="894.7" cy="968.2" rx="0.4" ry="0.8" transform="rotate(87 894.7 968.2)"/><ellipse cx="754.2" cy="913.8" rx="0.4" ry="0.9" transform="rotate(140 754.2 913.8)"/><ellipse cx="707.8" cy="826.8" rx="1.6" ry="4.2" transform="rotate(172 707.8 826.8)"/><ellipse cx="925.3" cy="822.0" rx="2.8" ry="2.9" transform="rotate(27 925.3 822.0)"/><ellipse cx="870.3" cy="677.7" rx="1.4" ry="1.8" transform="rotate(-97 870.3 677.7)"/><ellipse cx="883.3" cy="980.3" rx="2.6" ry="6.5" transform="rotate(91 883.3 980.3)"/><ellipse cx="794.2" cy="804.8" rx="1.0" ry="1.1" transform="rotate(179 794.2 804.8)"/><ellipse cx="908.0" cy="833.7" rx="5.8" ry="5.9" transform="rotate(55 908.0 833.7)"/><ellipse cx="743.2" cy="696.3" rx="1.3" ry="3.1" transform="rotate(-143 743.2 696.3)"/><ellipse cx="864.6" cy="972.7" rx="1.9" ry="4.0" transform="rotate(97 864.6 972.7)"/><ellipse cx="898.8" cy="765.9" rx="0.9" ry="0.9" transform="rotate(-71 898.8 765.9)"/><ellipse cx="906.3" cy="974.2" rx="0.4" ry="0.8" transform="rotate(83 906.3 974.2)"/><ellipse cx="759.8" cy="728.3" rx="0.7" ry="1.1" transform="rotate(-150 759.8 728.3)"/><ellipse cx="868.0" cy="695.8" rx="0.7" ry="0.8" transform="rotate(-100 868.0 695.8)"/><ellipse cx="795.1" cy="857.8" rx="6.1" ry="7.3" transform="rotate(149 795.1 857.8)"/><ellipse cx="961.6" cy="866.8" rx="6.5" ry="7.5" transform="rotate(41 961.6 866.8)"/><ellipse cx="862.1" cy="890.0" rx="2.1" ry="2.4" transform="rotate(106 862.1 890.0)"/><ellipse cx="826.1" cy="663.0" rx="0.5" ry="0.8" transform="rotate(-113 826.1 663.0)"/><ellipse cx="801.8" cy="886.5" rx="1.0" ry="1.3" transform="rotate(135 801.8 886.5)"/><ellipse cx="770.5" cy="904.6" rx="4.6" ry="7.5" transform="rotate(139 770.5 904.6)"/><ellipse cx="775.4" cy="880.2" rx="1.4" ry="1.9" transform="rotate(145 775.4 880.2)"/><ellipse cx="963.3" cy="914.2" rx="2.1" ry="2.9" transform="rotate(56 963.3 914.2)"/><ellipse cx="848.1" cy="761.5" rx="5.8" ry="6.1" transform="rotate(-133 848.1 761.5)"/><ellipse cx="839.5" cy="952.0" rx="0.6" ry="0.9" transform="rotate(107 839.5 952.0)"/><ellipse cx="949.6" cy="896.7" rx="0.7" ry="0.8" transform="rotate(56 949.6 896.7)"/><ellipse cx="871.7" cy="952.5" rx="0.6" ry="0.9" transform="rotate(96 871.7 952.5)"/><ellipse cx="809.2" cy="881.6" rx="4.4" ry="5.4" transform="rotate(134 809.2 881.6)"/><ellipse cx="915.3" cy="899.5" rx="1.3" ry="1.5" transform="rotate(73 915.3 899.5)"/><ellipse cx="973.0" cy="950.5" rx="2.1" ry="4.4" transform="rotate(60 973.0 950.5)"/><ellipse cx="868.5" cy="729.7" rx="2.7" ry="2.9" transform="rotate(-104 868.5 729.7)"/><ellipse cx="851.2" cy="870.7" rx="6.2" ry="6.7" transform="rotate(117 851.2 870.7)"/><ellipse cx="940.7" cy="930.6" rx="1.5" ry="2.1" transform="rotate(67 940.7 930.6)"/><ellipse cx="855.6" cy="879.7" rx="1.1" ry="1.2" transform="rotate(112 855.6 879.7)"/><ellipse cx="777.0" cy="919.9" rx="0.8" ry="1.4" transform="rotate(133 777.0 919.9)"/><ellipse cx="862.6" cy="951.5" rx="1.5" ry="2.3" transform="rotate(99 862.6 951.5)"/><ellipse cx="783.0" cy="662.1" rx="0.8" ry="1.9" transform="rotate(-126 783.0 662.1)"/><ellipse cx="885.8" cy="817.9" rx="5.6" ry="5.6" transform="rotate(93 885.8 817.9)"/><ellipse cx="950.9" cy="935.1" rx="0.9" ry="1.3" transform="rotate(64 950.9 935.1)"/><ellipse cx="890.6" cy="796.5" rx="6.2" ry="6.2" transform="rotate(-55 890.6 796.5)"/><ellipse cx="870.1" cy="904.8" rx="0.7" ry="0.8" transform="rotate(99 870.1 904.8)"/><ellipse cx="859.5" cy="857.7" rx="6.4" ry="6.8" transform="rotate(116 859.5 857.7)"/><ellipse cx="922.3" cy="972.9" rx="3.4" ry="7.6" transform="rotate(78 922.3 972.9)"/><ellipse cx="852.4" cy="647.5" rx="1.8" ry="3.1" transform="rotate(-102 852.4 647.5)"/><ellipse cx="915.7" cy="778.6" rx="3.3" ry="3.4" transform="rotate(-39 915.7 778.6)"/><ellipse cx="965.7" cy="930.0" rx="0.7" ry="1.2" transform="rotate(58 965.7 930.0)"/><ellipse cx="926.1" cy="956.7" rx="2.8" ry="4.9" transform="rotate(76 926.1 956.7)"/><ellipse cx="928.1" cy="871.7" rx="1.6" ry="1.7" transform="rotate(59 928.1 871.7)"/><ellipse cx="911.6" cy="764.5" rx="2.0" ry="2.1" transform="rotate(-57 911.6 764.5)"/><ellipse cx="716.8" cy="840.7" rx="0.6" ry="1.4" transform="rotate(167 716.8 840.7)"/><ellipse cx="784.7" cy="663.5" rx="1.6" ry="3.4" transform="rotate(-126 784.7 663.5)"/><ellipse cx="883.0" cy="731.7" rx="5.8" ry="6.3" transform="rotate(-93 883.0 731.7)"/><ellipse cx="877.7" cy="719.3" rx="0.9" ry="1.0" transform="rotate(-96 877.7 719.3)"/><ellipse cx="729.8" cy="720.5" rx="2.6" ry="6.1" transform="rotate(-152 729.8 720.5)"/><ellipse cx="928.8" cy="800.7" rx="1.0" ry="1.0" transform="rotate(-2 928.8 800.7)"/><ellipse cx="822.3" cy="935.6" rx="3.7" ry="5.7" transform="rotate(116 822.3 935.6)"/><ellipse cx="877.4" cy="947.4" rx="0.7" ry="1.0" transform="rotate(94 877.4 947.4)"/><ellipse cx="729.4" cy="880.0" rx="0.4" ry="0.9" transform="rotate(154 729.4 880.0)"/><ellipse cx="893.3" cy="980.8" rx="2.7" ry="6.8" transform="rotate(88 893.3 980.8)"/><ellipse cx="718.8" cy="776.4" rx="1.0" ry="2.0" transform="rotate(-171 718.8 776.4)"/><ellipse cx="923.2" cy="980.1" rx="0.7" ry="2.0" transform="rotate(78 923.2 980.1)"/><ellipse cx="873.4" cy="815.7" rx="0.8" ry="0.8" transform="rotate(135 873.4 815.7)"/><ellipse cx="929.3" cy="829.8" rx="3.0" ry="3.1" transform="rotate(33 929.3 829.8)"/><ellipse cx="930.4" cy="790.4" rx="1.1" ry="1.1" transform="rotate(-15 930.4 790.4)"/><ellipse cx="883.2" cy="718.7" rx="6.9" ry="7.7" transform="rotate(-92 883.2 718.7)"/><ellipse cx="842.8" cy="779.1" rx="3.9" ry="4.0" transform="rotate(-152 842.8 779.1)"/><ellipse cx="864.7" cy="679.5" rx="0.8" ry="1.1" transform="rotate(-100 864.7 679.5)"/><ellipse cx="771.4" cy="773.9" rx="5.1" ry="6.4" transform="rotate(-166 771.4 773.9)"/><ellipse cx="817.5" cy="886.4" rx="1.0" ry="1.2" transform="rotate(129 817.5 886.4)"/><ellipse cx="827.7" cy="783.0" rx="1.3" ry="1.4" transform="rotate(-162 827.7 783.0)"/><ellipse cx="863.0" cy="849.3" rx="0.9" ry="1.0" transform="rotate(117 863.0 849.3)"/><ellipse cx="814.4" cy="957.8" rx="2.4" ry="5.0" transform="rotate(115 814.4 957.8)"/><ellipse cx="766.3" cy="718.2" rx="0.6" ry="0.9" transform="rotate(-145 766.3 718.2)"/><ellipse cx="864.4" cy="933.5" rx="3.5" ry="4.8" transform="rotate(100 864.4 933.5)"/><ellipse cx="888.4" cy="696.3" rx="1.4" ry="1.7" transform="rotate(-89 888.4 696.3)"/><ellipse cx="774.6" cy="947.5" rx="0.3" ry="0.8" transform="rotate(128 774.6 947.5)"/><ellipse cx="947.8" cy="828.9" rx="1.0" ry="1.1" transform="rotate(23 947.8 828.9)"/><ellipse cx="807.4" cy="633.5" rx="0.3" ry="1.1" transform="rotate(-115 807.4 633.5)"/><ellipse cx="828.9" cy="852.7" rx="0.8" ry="0.9" transform="rotate(139 828.9 852.7)"/><ellipse cx="845.1" cy="898.9" rx="4.3" ry="5.2" transform="rotate(113 845.1 898.9)"/><ellipse cx="965.4" cy="921.6" rx="0.7" ry="1.0" transform="rotate(56 965.4 921.6)"/><ellipse cx="745.0" cy="883.1" rx="1.8" ry="3.3" transform="rotate(150 745.0 883.1)"/><ellipse cx="768.6" cy="881.0" rx="1.1" ry="1.7" transform="rotate(146 768.6 881.0)"/><ellipse cx="940.3" cy="937.1" rx="4.4" ry="6.6" transform="rotate(68 940.3 937.1)"/><ellipse cx="755.5" cy="780.4" rx="5.4" ry="7.4" transform="rotate(-170 755.5 780.4)"/><ellipse cx="715.2" cy="871.2" rx="0.9" ry="2.7" transform="rotate(158 715.2 871.2)"/><ellipse cx="808.4" cy="741.5" rx="5.1" ry="6.0" transform="rotate(-142 808.4 741.5)"/><ellipse cx="765.3" cy="872.1" rx="1.2" ry="1.7" transform="rotate(150 765.3 872.1)"/><ellipse cx="956.8" cy="929.3" rx="0.5" ry="0.8" transform="rotate(61 956.8 929.3)"/><ellipse cx="960.3" cy="922.5" rx="4.8" ry="7.0" transform="rotate(58 960.3 922.5)"/><ellipse cx="762.8" cy="926.4" rx="1.5" ry="3.4" transform="rotate(135 762.8 926.4)"/><ellipse cx="845.0" cy="947.8" rx="1.7" ry="2.8" transform="rotate(106 845.0 947.8)"/><ellipse cx="748.6" cy="869.1" rx="0.6" ry="1.0" transform="rotate(154 748.6 869.1)"/><ellipse cx="941.0" cy="967.2" rx="0.4" ry="0.9" transform="rotate(72 941.0 967.2)"/><ellipse cx="800.2" cy="811.6" rx="6.2" ry="6.9" transform="rotate(174 800.2 811.6)"/><ellipse cx="780.6" cy="902.4" rx="0.5" ry="0.8" transform="rotate(137 780.6 902.4)"/><ellipse cx="871.0" cy="733.9" rx="5.8" ry="6.3" transform="rotate(-103 871.0 733.9)"/><ellipse cx="770.9" cy="903.4" rx="1.9" ry="3.0" transform="rotate(139 770.9 903.4)"/><ellipse cx="783.2" cy="916.2" rx="2.1" ry="3.5" transform="rotate(132 783.2 916.2)"/><ellipse cx="888.4" cy="698.0" rx="1.3" ry="1.6" transform="rotate(-89 888.4 698.0)"/><ellipse cx="815.0" cy="949.9" rx="0.4" ry="0.8" transform="rotate(116 815.0 949.9)"/><ellipse cx="749.4" cy="895.3" rx="1.0" ry="2.0" transform="rotate(146 749.4 895.3)"/><ellipse cx="760.8" cy="710.9" rx="0.5" ry="0.8" transform="rotate(-144 760.8 710.9)"/><ellipse cx="855.0" cy="986.7" rx="0.4" ry="1.4" transform="rotate(100 855.0 986.7)"/><ellipse cx="851.4" cy="663.5" rx="5.3" ry="7.9" transform="rotate(-104 851.4 663.5)"/><ellipse cx="838.6" cy="701.6" rx="0.7" ry="0.9" transform="rotate(-115 838.6 701.6)"/><ellipse cx="897.2" cy="924.5" rx="0.7" ry="0.9" transform="rotate(85 897.2 924.5)"/><ellipse cx="840.3" cy="931.8" rx="3.5" ry="5.0" transform="rotate(110 840.3 931.8)"/><ellipse cx="907.5" cy="907.3" rx="3.7" ry="4.4" transform="rotate(79 907.5 907.3)"/><ellipse cx="726.2" cy="901.1" rx="0.7" ry="2.4" transform="rotate(148 726.2 901.1)"/><ellipse cx="957.0" cy="884.7" rx="1.5" ry="1.8" transform="rotate(49 957.0 884.7)"/><ellipse cx="714.3" cy="776.7" rx="1.3" ry="3.0" transform="rotate(-171 714.3 776.7)"/><ellipse cx="885.2" cy="969.9" rx="0.4" ry="0.8" transform="rotate(90 885.2 969.9)"/><ellipse cx="797.4" cy="955.6" rx="2.2" ry="5.4" transform="rotate(120 797.4 955.6)"/><ellipse cx="737.4" cy="801.0" rx="1.4" ry="2.2" transform="rotate(-179 737.4 801.0)"/><ellipse cx="893.6" cy="721.5" rx="5.5" ry="6.1" transform="rotate(-85 893.6 721.5)"/><ellipse cx="787.5" cy="841.1" rx="6.4" ry="7.6" transform="rotate(159 787.5 841.1)"/><ellipse cx="935.2" cy="937.1" rx="3.1" ry="4.6" transform="rotate(70 935.2 937.1)"/><ellipse cx="955.2" cy="961.1" rx="0.9" ry="1.9" transform="rotate(67 955.2 961.1)"/><ellipse cx="748.1" cy="836.6" rx="1.7" ry="2.5" transform="rotate(166 748.1 836.6)"/><ellipse cx="916.8" cy="797.2" rx="7.7" ry="6.0"/><ellipse cx="899.8" cy="816.4" rx="6.4" ry="5.5"/><ellipse cx="919.0" cy="814.2" rx="5.1" ry="5.1"/><ellipse cx="916.8" cy="886.6" rx="9.4" ry="7.7"/><ellipse cx="933.9" cy="954.8" rx="10.6" ry="6.0"/><ellipse cx="891.3" cy="946.3" rx="7.7" ry="5.1"/><ellipse cx="818.9" cy="954.8" rx="8.5" ry="5.1"/><ellipse cx="780.5" cy="950.5" rx="6.0" ry="4.3"/><ellipse cx="725.2" cy="873.9" rx="5.1" ry="9.4"/><ellipse cx="714.5" cy="861.1" rx="3.4" ry="6.8"/><ellipse cx="784.8" cy="869.6" rx="4.3" ry="4.3"/><ellipse cx="799.7" cy="886.6" rx="5.1" ry="4.7"/><ellipse cx="878.5" cy="895.2" rx="5.1" ry="5.1"/><ellipse cx="899.8" cy="916.5" rx="5.1" ry="4.3"/><ellipse cx="938.1" cy="912.2" rx="4.3" ry="4.3"/><ellipse cx="840.2" cy="899.4" rx="3.4" ry="3.4"/><ellipse cx="870.0" cy="929.2" rx="3.4" ry="3.4"/><ellipse cx="861.5" cy="965.4" rx="8.5" ry="4.3"/><ellipse cx="904.1" cy="976.1" rx="6.4" ry="3.4"/><ellipse cx="938.1" cy="974.0" rx="5.1" ry="3.0"/><ellipse cx="767.8" cy="929.2" rx="3.8" ry="3.4"/><ellipse cx="827.4" cy="844.1" rx="3.4" ry="3.4"/><ellipse cx="840.2" cy="886.6" rx="3.4" ry="3.4"/><ellipse cx="955.2" cy="903.7" rx="5.1" ry="4.3"/><ellipse cx="844.4" cy="699.3" rx="5.1" ry="4.3"/><ellipse cx="938.1" cy="852.6" rx="4.3" ry="3.8"/><ellipse cx="878.5" cy="835.5" rx="3.8" ry="3.4"/></g>
<g fill="none" stroke="#4b6886" stroke-width="2.3" stroke-linejoin="round"><path d="M841.9 633.3 L839.1 633.7 L836.3 633.7 L833.4 633.1 L830.7 634.3 L828.0 635.3 L825.2 636.1 L822.3 636.9 L819.6 638.0 L817.1 639.8 L814.1 640.3 L811.2 641.2 L808.5 642.6 L805.3 642.6 L802.5 644.7 L799.3 644.4 L797.2 646.4 L795.1 648.4 L791.9 648.7 L790.0 650.9 L787.3 651.5 L785.2 653.7 L781.9 652.7 L779.3 653.7 L777.0 655.6 L774.3 657.5 L771.9 659.7 L769.6 662.0 L767.8 664.7 L765.7 667.0 L762.6 668.2 L760.4 670.4 L758.7 673.0 L756.2 674.6 L753.8 676.4 L751.1 677.8 L750.0 680.4 L747.5 681.5 L745.6 683.4 L743.2 684.7 L741.9 687.0 L739.1 688.9 L736.3 690.7 L735.5 694.4 L735.4 698.1 L733.2 700.0 L730.8 701.6 L728.9 703.7 L727.6 706.5 L726.5 709.5 L723.7 711.5 L723.3 714.8 L721.2 717.0 L720.4 719.7 L719.6 722.4 L719.3 725.3 L717.8 727.8 L717.4 730.5 L716.4 732.9 L715.9 735.5 L713.5 737.4 L713.4 740.2 L712.2 742.6 L709.8 743.9 L708.7 746.5 L706.0 747.4 L704.8 750.0 L703.3 752.4 L704.4 755.5 L703.2 758.0 L701.0 760.1 L701.1 763.0 L701.2 765.9 L700.1 768.9 L701.3 771.9 L702.1 774.8 L701.1 777.8 L701.6 780.8 L702.0 783.9 L703.8 786.5 L705.0 789.4 L704.8 792.6 L706.1 794.9 L705.7 797.9 L707.6 800.0"/><path d="M707.5 790.0 L706.6 792.5 L707.7 795.3 L707.1 797.8 L707.1 800.5 L706.8 803.1 L704.9 805.5 L705.9 808.2 L704.8 810.7 L704.6 813.3 L704.9 816.4 L705.6 819.5 L704.7 822.7 L706.2 825.7 L705.5 828.9 L707.8 831.1 L710.9 832.1 L712.9 834.6 L715.3 836.6 L717.0 838.7 L718.1 841.1 L717.8 844.1 L719.3 846.3 L721.1 848.3 L722.8 850.7 L722.9 853.9 L725.6 855.8 L726.5 858.6 L726.9 861.6 L728.9 863.9 L730.6 866.5 L733.4 868.2 L733.9 871.8 L736.6 873.6 L739.1 875.8 L741.0 878.4 L742.5 881.4 L744.0 883.7 L746.4 885.2 L749.0 886.4 L751.5 887.8 L754.1 888.8 L756.1 891.1 L758.8 891.4 L760.7 893.6 L763.3 894.1 L765.3 895.9 L767.7 896.9 L770.2 898.0 L772.3 899.4 L774.0 901.7 L776.8 902.1 L779.0 903.5 L781.4 904.7 L784.0 906.4 L787.2 906.6 L787.5 903.8 L788.4 901.2 L790.9 899.2 L791.7 896.5 L791.5 893.5 L793.0 891.1 L793.3 887.9 L795.5 885.4 L796.8 882.6 L796.9 879.4 L799.4 878.4 L802.2 879.7 L804.7 878.4 L806.5 880.7 L809.1 881.9 L811.5 883.3 L810.9 886.3 L810.9 889.3 L810.3 892.3 L808.6 895.0 L806.6 897.5 L807.2 901.0 L805.2 903.6 L804.7 906.6 L805.7 909.4 L804.9 912.6 L805.9 915.4 L806.6 918.3 L809.2 919.9 L811.7 921.6 L813.3 924.5 L816.6 925.3 L818.3 928.0 L821.3 927.9 L824.1 929.1 L826.9 930.2 L829.9 929.9 L832.3 931.1 L835.0 931.4 L836.9 933.7 L839.7 933.8 L840.2 931.2 L841.0 928.7 L842.7 926.6 L844.2 924.4 L845.5 922.2 L845.6 919.4 L846.8 917.0 L848.1 914.8 L849.4 912.4 L852.2 913.6 L855.2 914.4 L857.1 916.4 L857.8 918.9 L857.9 921.8 L858.9 924.2 L861.0 926.1 L863.9 926.9 L866.8 927.4 L869.8 927.7 L872.7 928.0 L872.4 925.0 L872.7 922.0 L873.1 919.1 L874.6 916.3 L874.0 913.4 L872.1 911.2 L871.1 908.5 L868.8 906.6 L866.6 904.5 L866.5 901.3 L864.9 898.8 L863.0 896.9 L861.4 894.6 L858.8 893.3 L857.2 891.1 L856.0 888.3 L852.6 887.8 L851.3 885.2 L853.9 886.3 L856.3 887.7 L859.1 888.2 L860.4 890.6 L862.6 892.1 L864.6 893.8 L866.4 895.8 L868.2 897.7 L870.8 898.8 L873.8 899.5 L876.5 901.2 L879.2 902.6 L882.4 902.7 L885.1 902.9 L887.4 901.3 L890.0 900.8"/><path d="M851.1 646.3 L848.4 646.0 L845.8 646.2 L843.3 647.2 L840.7 647.5 L838.1 648.1 L835.5 648.7 L832.8 648.5 L830.2 648.7 L827.7 650.1 L824.9 649.2 L822.2 648.7 L819.6 650.0 L816.9 648.9 L814.1 649.0 L811.3 649.6 L808.5 649.1 L805.7 650.8 L803.5 653.3 L801.1 655.6 L798.7 657.5 L795.7 658.7 L793.7 661.1 L791.6 662.9 L788.6 662.4 L786.3 663.9 L784.7 666.7 L781.5 667.9 L779.4 670.2 L777.0 672.2 L774.2 674.0 L770.7 674.3 L767.8 675.9 L766.3 678.2 L764.6 680.2 L762.6 682.1 L762.3 685.1 L760.4 687.0 L759.3 689.9 L757.0 691.8 L754.5 693.5 L753.5 696.3 L751.1 698.1 L749.9 701.3 L747.4 703.7 L747.5 707.6 L749.3 711.1 L749.5 714.0 L750.6 716.6 L750.3 719.6 L752.1 722.1 L752.0 725.1 L753.0 727.8 L754.8 725.4 L757.3 724.0 L760.1 722.7 L762.4 721.1 L764.1 718.5 L766.5 717.3 L767.6 714.6 L769.8 713.1 L771.2 710.8 L773.3 709.3 L771.4 706.5 L770.9 703.1 L769.6 700.0 L771.8 697.8 L773.3 695.2 L774.5 692.5 L776.4 690.1 L777.0 687.0 L779.0 685.1 L781.1 683.5 L783.6 682.5 L785.7 680.7 L788.1 679.6 L790.4 677.6 L793.2 676.5 L796.1 675.4 L798.5 673.7 L801.1 672.2 L803.6 671.0 L806.6 671.3 L809.4 670.9 L811.7 668.9 L814.1 667.4 L816.7 666.5 L819.6 666.7 L822.5 667.2 L825.1 665.0 L828.0 666.2 L830.8 665.6 L833.5 664.7 L836.3 664.8 L838.6 662.9 L839.2 659.5 L841.2 657.4 L843.7 655.6 L843.2 658.7 L843.5 661.9 L841.9 664.8 L840.2 667.4 L840.0 670.4 L843.0 670.7 L845.8 671.5 L848.6 672.2 L851.1 674.1 L853.6 675.4 L856.3 676.2 L858.8 677.7 L861.3 678.8 L864.1 679.6 L865.4 682.0 L867.1 684.0 L869.3 685.5 L871.5 687.0 L873.9 689.4 L875.2 692.6 L876.1 690.1 L876.4 687.4 L877.0 684.8 L878.8 682.7 L880.3 680.4 L880.7 677.8 L878.3 675.7 L876.6 673.1 L875.2 670.4 L873.1 668.3 L871.8 665.5 L869.7 663.4 L867.8 661.1 L866.1 659.1 L864.5 657.0 L862.1 655.7 L860.8 653.2 L859.2 651.2 L856.7 650.0 L853.4 648.9 L851.1 646.3Z"/><path d="M732.6 751.9 L735.5 751.5 L737.7 749.8 L740.0 748.1 L742.0 750.9 L742.6 754.3 L743.7 757.4 L744.4 761.2 L745.6 764.8 L743.0 766.7 L742.1 769.9 L740.0 772.2 L738.7 769.8 L737.9 767.2 L736.4 764.9 L734.4 763.0 L734.9 760.0 L733.4 757.4 L733.4 754.6 L732.6 751.9Z"/><path d="M791.9 764.8 L794.7 764.6 L797.3 766.2 L800.1 766.9 L802.9 767.0 L805.7 767.6 L808.5 767.6 L809.5 764.9 L812.2 763.2 L813.9 760.9 L815.3 758.5 L815.9 755.6 L816.7 753.0 L818.0 750.5 L817.8 747.7 L819.8 745.4 L819.6 742.6 L820.0 745.5 L822.2 747.6 L823.8 750.0 L824.2 752.9 L825.2 755.6 L826.7 753.3 L828.5 751.2 L829.3 748.6 L830.7 746.3 L831.9 743.7 L834.9 743.1 L835.6 740.1 L838.1 738.9 L837.2 741.7 L838.3 744.8 L837.7 747.7 L836.5 750.5 L837.6 753.5 L837.3 756.4 L836.3 759.3 L837.8 761.4 L839.0 763.9 L840.3 766.2 L842.1 768.1 L843.2 770.6 L845.6 772.2 L843.2 773.6 L840.4 774.2 L839.1 777.2 L836.3 777.8 L836.0 780.7 L834.4 783.3 L834.0 786.3 L832.6 788.9 L830.0 790.3 L827.8 792.4 L825.6 794.4 L823.3 796.3 L821.6 793.9 L819.0 792.5 L816.4 791.1 L814.3 789.1 L812.2 787.0 L809.5 788.3 L807.2 790.1 L806.0 793.1 L802.8 793.9 L801.1 796.3 L800.5 793.5 L798.2 791.8 L796.8 789.5 L794.6 787.8 L793.7 785.2 L796.0 783.8 L798.2 782.2 L800.5 780.9 L802.0 778.4 L804.8 777.8 L803.7 775.2 L801.1 774.0 L799.1 772.4 L797.9 769.9 L795.7 768.4 L793.7 766.7 L791.9 764.8Z"/><path d="M890.0 701.9 L887.0 701.8 L884.2 703.5 L881.1 702.9 L878.2 703.5 L875.2 703.7 L873.5 706.4 L872.8 709.4 L873.5 712.7 L872.3 715.6 L871.5 718.5 L871.0 721.4 L869.1 723.5 L867.2 725.6 L865.8 728.0 L865.4 730.9 L864.4 733.5 L863.4 736.1 L861.4 738.2 L860.4 740.7 L858.1 742.4 L857.9 745.5 L855.2 746.9 L855.1 750.0 L853.2 751.9 L851.1 753.7 L853.5 752.4 L856.4 752.6 L858.8 751.1 L861.4 750.4 L864.1 750.0 L867.0 748.8 L869.2 746.4 L872.6 746.3 L875.2 744.4 L874.8 741.5 L876.1 738.9 L876.0 736.0 L877.0 733.3 L879.2 731.5 L882.0 730.9 L884.4 729.6 L887.3 731.4 L890.0 733.3"/><path d="M890.0 753.7 L887.6 754.9 L885.1 755.7 L882.6 756.4 L880.4 758.1 L877.9 758.9 L875.2 759.3 L874.0 761.9 L873.0 764.7 L872.3 767.6 L871.5 770.4 L873.3 772.8 L876.0 774.3 L877.9 776.5 L880.7 777.8 L883.7 776.6 L887.0 777.1 L890.0 775.9"/><path d="M756.1 819.2 L759.1 817.8 L761.8 816.0 L763.9 813.3 L763.9 810.3 L764.4 807.4 L766.2 804.7 L765.8 801.7 L766.7 798.9 L769.7 797.4 L770.9 794.8 L771.6 791.9 L774.7 793.2 L777.2 795.4 L779.4 797.8 L779.9 800.8 L781.9 803.4 L783.2 806.2 L783.3 809.4 L782.1 812.2 L782.5 815.3 L781.2 818.1 L781.4 821.1 L782.8 824.2 L782.9 827.5 L783.3 830.8 L781.1 829.0 L777.9 828.8 L775.7 827.0 L773.6 825.0 L771.9 822.8 L770.3 820.5 L767.7 819.2 L764.8 818.1 L761.9 820.0 L759.0 819.1 L756.1 819.2Z"/><path d="M791.1 797.8 L793.8 797.7 L796.3 796.5 L798.9 796.2 L801.3 794.5 L803.8 793.6 L806.6 793.9 L809.0 792.4 L811.6 791.6 L814.4 792.1 L817.0 791.3 L819.6 790.8 L822.2 790.0 L825.3 790.2 L828.2 791.3 L831.1 792.3 L833.8 793.9 L831.4 795.3 L829.2 797.0 L827.3 799.1 L826.1 801.7 L827.3 804.5 L827.7 807.4 L826.0 810.5 L827.4 813.3 L827.1 816.3 L828.0 819.2 L825.4 817.5 L823.3 815.3 L821.0 813.3 L818.6 811.5 L816.3 809.4 L814.0 807.3 L810.8 806.4 L809.3 803.3 L806.6 801.7 L804.2 800.3 L801.3 801.0 L798.8 799.8 L796.4 798.6 L793.6 798.6 L791.1 797.8Z"/><path d="M841.6 828.9 L843.6 826.8 L845.9 825.1 L848.6 824.2 L850.3 821.8 L853.3 821.1 L855.3 823.7 L858.1 825.5 L861.0 826.9 L862.0 829.4 L863.1 831.8 L865.0 833.7 L866.8 835.7 L867.8 838.2 L869.4 840.3 L870.8 842.5 L871.9 845.6 L874.1 847.8 L877.0 849.4 L878.5 852.2 L875.1 853.4 L872.7 856.1 L871.2 853.5 L869.3 851.2 L867.4 848.8 L864.8 847.1 L863.6 844.2 L861.0 842.5 L859.2 840.5 L856.7 839.5 L854.5 838.1 L852.3 836.8 L849.6 836.2 L847.4 834.7 L845.8 832.4 L842.9 831.5 L841.6 828.9Z"/><path d="M829.9 937.7 L832.9 937.9 L835.8 938.6 L838.9 938.1 L841.6 939.7 L843.8 941.4 L845.3 943.8 L847.4 945.5 L844.1 945.9 L841.1 947.4 L837.7 947.4 L836.5 944.4 L834.1 942.3 L831.6 940.4 L829.9 937.7Z"/><path d="M868.8 813.3 L871.0 811.6 L872.8 809.5 L874.7 807.5 L876.6 805.5 L877.3 802.6 L879.6 800.1 L879.8 796.9 L880.5 793.9 L883.7 793.7 L886.9 793.2 L890.0 791.9"/><path d="M880.0 703.7 L881.6 706.1 L885.0 705.8 L886.5 708.4 L888.6 710.1 L891.1 711.1 L893.7 711.7 L896.0 713.0 L898.7 713.4 L900.9 714.7 L903.1 716.2 L905.8 716.7 L907.8 718.5"/><path d="M880.0 737.0 L882.6 735.6 L885.8 736.0 L888.4 734.4 L891.1 733.3 L893.9 733.4 L896.7 734.4 L899.4 733.5 L902.2 733.3 L904.2 735.5 L907.0 736.1 L909.3 737.6 L912.5 737.4 L914.5 739.7 L917.0 740.7 L920.3 741.3 L923.5 740.7"/><path d="M880.0 757.4 L882.6 756.0 L885.7 757.4 L888.2 755.3 L891.1 755.6 L894.4 755.5 L897.6 754.8 L900.8 755.5 L904.1 755.6 L907.1 757.0 L910.6 757.1 L913.3 759.3 L916.6 759.6 L919.5 757.9 L922.6 757.4"/><path d="M880.0 777.8 L882.8 777.4 L885.6 777.1 L888.3 776.1 L891.1 775.9 L894.0 776.4 L896.6 778.1 L899.4 778.8 L902.2 779.6 L904.4 781.1 L905.6 783.7 L907.8 785.2 L906.3 787.9 L904.9 790.8 L902.2 792.6 L899.6 794.1 L897.0 795.4 L894.1 796.1 L891.1 796.3 L888.4 795.3 L885.5 795.6 L882.9 794.0 L880.0 794.4"/><path d="M880.0 825.0 L882.5 826.2 L885.4 825.3 L887.8 826.9 L888.1 830.0 L889.5 832.6 L891.7 834.7 L894.4 834.8 L896.2 837.5 L899.0 837.5 L901.4 838.6 L902.1 841.8 L901.7 845.3 L903.3 848.3 L902.9 851.0 L901.3 853.2 L899.5 855.3 L899.4 858.1 L901.0 860.3 L903.4 861.9 L905.3 863.9 L907.3 865.8 L909.9 866.5 L912.5 867.0 L915.0 867.8 L915.8 870.5 L914.7 873.2 L915.1 875.9 L915.7 878.7 L915.0 881.4 L913.8 884.0 L911.1 885.2 L909.8 887.8 L907.3 889.3 L905.3 891.1 L903.5 893.3 L902.4 896.0 L901.4 898.7 L899.4 900.8 L896.6 900.9 L893.9 901.6 L891.0 901.1 L888.3 901.9 L885.4 901.1 L882.7 901.5 L880.0 902.8"/></g>
</g>
<circle cx="712.9" cy="893.4" r="4.6" fill="#fff"/>
</svg>
<div class="t" style="left:881.5px;top:567.8px;font-size:21px;line-height:21px;color:#fff;font-weight:400;letter-spacing:0px;font-family:'Liberation Sans', sans-serif;">N</div>
<div class="t" style="left:881.5px;top:1010.1px;font-size:21px;line-height:21px;color:#fff;font-weight:400;letter-spacing:0px;font-family:'Liberation Sans', sans-serif;">S</div>
<div class="t" style="left:523.0px;top:797.1px;font-size:21px;line-height:21px;color:#fff;font-weight:400;letter-spacing:0px;font-family:'Liberation Sans', sans-serif;">E</div>
<div class="t" style="left:1223.0px;top:797.1px;font-size:21px;line-height:21px;color:#fff;font-weight:400;letter-spacing:0px;font-family:'Liberation Sans', sans-serif;">W</div>
<div class="t" style="left:582.6px;top:891.7px;font-size:13.5px;line-height:13.5px;color:#fff;font-weight:400;letter-spacing:-0.12px;font-family:'Liberation Sans', sans-serif;">1, 20 12 31.9 (5.8)</div>
</body></html>
